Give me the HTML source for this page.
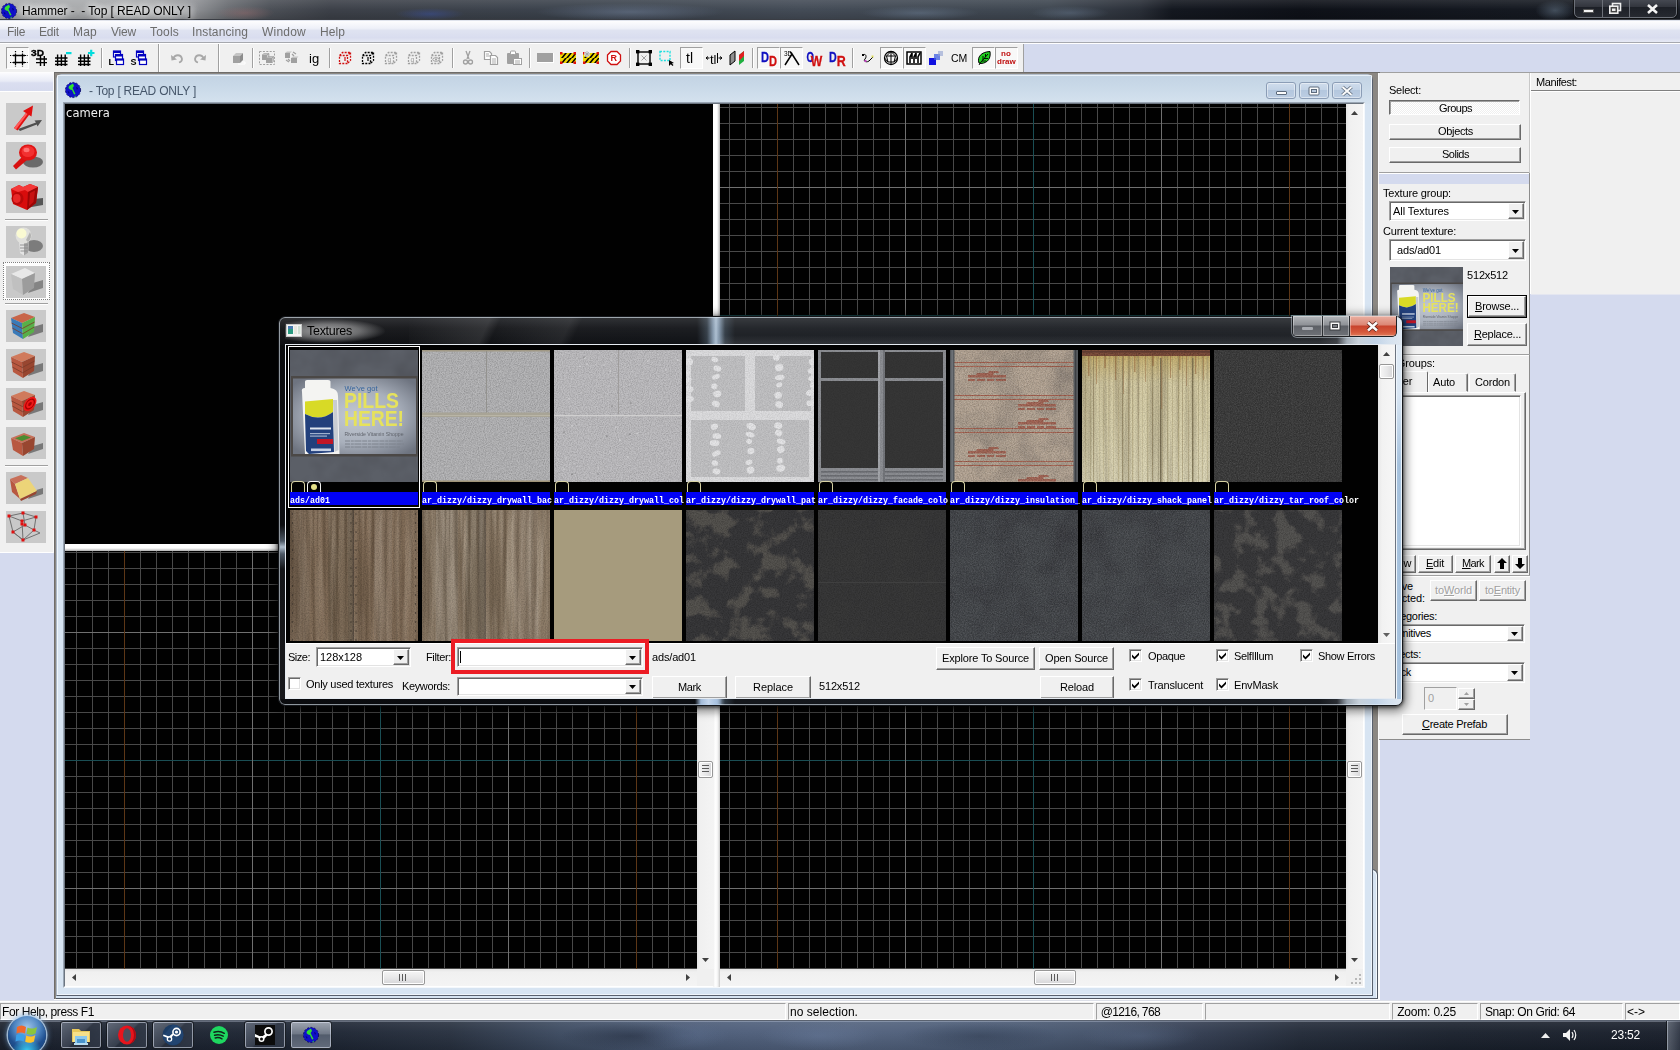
<!DOCTYPE html>
<html><head><meta charset="utf-8"><title>Hammer</title>
<style>
html,body{margin:0;padding:0;}
body{opacity:.999;width:1680px;height:1050px;overflow:hidden;position:relative;background:#d4daee;font-family:"Liberation Sans",sans-serif;font-size:11px;color:#000;}
div{position:absolute;box-sizing:border-box;}
svg{position:absolute;overflow:visible;}
.t{white-space:nowrap;line-height:13px;font-size:11px;}
.s{white-space:nowrap;line-height:15px;font-size:12px;font-family:"DejaVu Sans","Liberation Sans",sans-serif;}
.btn{background:#f0f0f0;border:1px solid;border-color:#fff #696969 #696969 #fff;box-shadow:inset -1px -1px 0 #a0a0a0, inset 1px 1px 0 #f0f0f0;text-align:center;font-size:11px;line-height:13px;white-space:nowrap;}
.sunk{background:#fff;border:1px solid;border-color:#a0a0a0 #fff #fff #a0a0a0;box-shadow:inset 1px 1px 0 #696969, inset -1px -1px 0 #e3e3e3;}
.cb{background:#fff;border:1px solid;border-color:#a0a0a0 #fff #fff #a0a0a0;box-shadow:inset 1px 1px 0 #696969, inset -1px -1px 0 #e3e3e3;}
.mono{font-family:"Liberation Mono",monospace;font-weight:bold;font-size:8.33px;line-height:13px;color:#fff;white-space:nowrap;letter-spacing:0px;}
u{text-decoration:underline;}
</style></head>
<body>
<div style="left:0px;top:0px;width:1680px;height:21px;background:linear-gradient(90deg,#a9abad 0px,#a7a9ab 150px,#8f9195 195px,#6b6e73 228px,#4c5057 270px,#3d4149 330px,#3c434d 560px,#444c57 800px,#3f4751 1050px,#2a2f38 1140px,#141820 1172px,#0e1118 1300px,#141820 1480px,#1a1e26 1680px);"></div>
<div style="left:0px;top:0px;width:1680px;height:21px;background:linear-gradient(rgba(255,255,255,.10) 0,rgba(255,255,255,0) 45%,rgba(0,0,0,.18) 100%);"></div>
<div style="left:535px;top:3px;width:190px;height:18px;background:radial-gradient(ellipse at center,rgba(110,125,150,.55),rgba(110,125,150,0) 70%);"></div>
<div style="left:395px;top:8px;width:70px;height:12px;background:radial-gradient(ellipse at center,rgba(60,90,200,.35),rgba(60,90,200,0) 70%);"></div>
<div style="left:215px;top:6px;width:60px;height:14px;background:radial-gradient(ellipse at center,rgba(170,110,110,.35),rgba(150,120,120,0) 70%);"></div>
<div style="left:860px;top:6px;width:120px;height:14px;background:radial-gradient(ellipse at center,rgba(120,140,165,.40),rgba(120,140,165,0) 70%);"></div>
<div style="left:1030px;top:6px;width:80px;height:14px;background:radial-gradient(ellipse at center,rgba(120,140,165,.35),rgba(120,140,165,0) 70%);"></div>
<div style="left:1535px;top:0px;width:40px;height:21px;background:radial-gradient(ellipse at center,rgba(120,140,160,.45),rgba(120,140,160,0) 70%);"></div>
<div style="left:0px;top:19px;width:1680px;height:1px;background:#3a3d44;"></div>
<div style="left:0px;top:20px;width:1680px;height:1px;background:#dfe3ec;"></div>
<svg width="16" height="16" viewBox="0 0 16 16" style="left:1px;top:3px"><circle cx="8" cy="8" r="7.6" fill="#1010c8"/><circle cx="8" cy="8" r="7.6" fill="none" stroke="#000060" stroke-width=".8" stroke-dasharray="2 1.5"/><path d="M4 4 L8 1.5 L9 4 L7.5 6 L9.5 10 L10.5 12 L9 12.5 L7 8 L5 7.5 L3.5 6 Z" fill="#30e030"/><path d="M9 14.5 L11 13.5 L10.5 15 Z" fill="#30e030"/><path d="M2.5 9 L4.5 10 L4 12 Z M11 5 L13 6 L12 8 Z" fill="#000080"/></svg>
<div style="left:22px;top:4px;white-space:nowrap;font:normal 12px 'Liberation Sans',sans-serif;line-height:15px;letter-spacing:-0.082px;color:#000;text-shadow:0 0 6px #fff,0 0 8px #fff,0 0 10px rgba(255,255,255,.8);">Hammer - &nbsp;- Top [ READ ONLY ]</div>
<div style="left:1574px;top:-3px;width:103px;height:21px;border:1px solid #6c7078;border-radius:0 0 5px 5px;background:linear-gradient(#4a4e57 0%,#33363e 45%,#1d2027 50%,#262930 100%);box-shadow:0 0 0 1px rgba(10,10,10,.6);"></div>
<div style="left:1602px;top:0px;width:1px;height:17px;background:#6c7078;"></div>
<div style="left:1629px;top:0px;width:1px;height:17px;background:#6c7078;"></div>
<div style="left:1583px;top:9px;width:11px;height:4px;background:#f2f2f2;border:1px solid #555;border-radius:1px;"></div>
<svg width="14" height="12" style="left:1609px;top:3px"><rect x="3.5" y=".5" width="8" height="7" fill="none" stroke="#eee" stroke-width="1.6"/><rect x=".8" y="3.2" width="8" height="7" fill="#444" stroke="#eee" stroke-width="1.6"/><rect x="3" y="5.5" width="3.5" height="2.5" fill="#eee"/></svg>
<svg width="12" height="10" style="left:1647px;top:4px"><path d="M1 1 L10 9 M10 1 L1 9" stroke="#f4f4f4" stroke-width="2.6" fill="none"/></svg>
<div style="left:0px;top:21px;width:1680px;height:21px;background:linear-gradient(#fdfdfe 0%,#eef0f8 35%,#dfe3f1 45%,#d9ddef 80%,#e6e9f4 100%);"></div>
<div style="left:0px;top:42px;width:1680px;height:1px;background:#a6a8ae;"></div>
<div style="left:7px;top:25px;white-space:nowrap;font:normal 12px 'Liberation Sans',sans-serif;line-height:15px;letter-spacing:-0.336px;color:#6d6d6d;">File</div>
<div style="left:39px;top:25px;white-space:nowrap;font:normal 12px 'Liberation Sans',sans-serif;line-height:15px;letter-spacing:-0.172px;color:#6d6d6d;">Edit</div>
<div style="left:73px;top:25px;white-space:nowrap;font:normal 12px 'Liberation Sans',sans-serif;line-height:15px;letter-spacing:0.219px;color:#6d6d6d;">Map</div>
<div style="left:111px;top:25px;white-space:nowrap;font:normal 12px 'Liberation Sans',sans-serif;line-height:15px;letter-spacing:-0.199px;color:#6d6d6d;">View</div>
<div style="left:150px;top:25px;white-space:nowrap;font:normal 12px 'Liberation Sans',sans-serif;line-height:15px;letter-spacing:0.197px;color:#6d6d6d;">Tools</div>
<div style="left:192px;top:25px;white-space:nowrap;font:normal 12px 'Liberation Sans',sans-serif;line-height:15px;letter-spacing:0.13px;color:#6d6d6d;">Instancing</div>
<div style="left:262px;top:25px;white-space:nowrap;font:normal 12px 'Liberation Sans',sans-serif;line-height:15px;letter-spacing:0.219px;color:#6d6d6d;">Window</div>
<div style="left:320px;top:25px;white-space:nowrap;font:normal 12px 'Liberation Sans',sans-serif;line-height:15px;letter-spacing:0.078px;color:#6d6d6d;">Help</div>
<div style="left:0px;top:43px;width:1680px;height:30px;background:#d4daee;"></div>
<div style="left:0px;top:43px;width:1024px;height:29px;background:#f0f0f0;"></div>
<div style="left:0px;top:43px;width:1680px;height:1px;background:#fff;"></div>
<div style="left:54px;top:72px;width:1626px;height:1px;background:#a0a0a0;"></div>
<div style="left:0px;top:72px;width:54px;height:1px;background:#fdfdfe;"></div>
<div style="left:158px;top:44px;width:1px;height:28px;background:#a0a0a0;"></div>
<div style="left:159px;top:44px;width:1px;height:28px;background:#fff;"></div>
<div style="left:218px;top:44px;width:1px;height:28px;background:#a0a0a0;"></div>
<div style="left:219px;top:44px;width:1px;height:28px;background:#fff;"></div>
<div style="left:1023px;top:44px;width:1px;height:28px;background:#a0a0a0;"></div>
<div style="left:101px;top:48px;width:1px;height:20px;background:#a0a0a0;"></div>
<div style="left:102px;top:48px;width:1px;height:20px;background:#fff;"></div>
<div style="left:252px;top:48px;width:1px;height:20px;background:#a0a0a0;"></div>
<div style="left:253px;top:48px;width:1px;height:20px;background:#fff;"></div>
<div style="left:329px;top:48px;width:1px;height:20px;background:#a0a0a0;"></div>
<div style="left:330px;top:48px;width:1px;height:20px;background:#fff;"></div>
<div style="left:452px;top:48px;width:1px;height:20px;background:#a0a0a0;"></div>
<div style="left:453px;top:48px;width:1px;height:20px;background:#fff;"></div>
<div style="left:529px;top:48px;width:1px;height:20px;background:#a0a0a0;"></div>
<div style="left:530px;top:48px;width:1px;height:20px;background:#fff;"></div>
<div style="left:629px;top:48px;width:1px;height:20px;background:#a0a0a0;"></div>
<div style="left:630px;top:48px;width:1px;height:20px;background:#fff;"></div>
<div style="left:752px;top:48px;width:1px;height:20px;background:#a0a0a0;"></div>
<div style="left:753px;top:48px;width:1px;height:20px;background:#fff;"></div>
<div style="left:852px;top:48px;width:1px;height:20px;background:#a0a0a0;"></div>
<div style="left:853px;top:48px;width:1px;height:20px;background:#fff;"></div>
<div style="left:6px;top:47px;width:23px;height:22px;background:#f8f8f8;border:1px solid;border-color:#a0a0a0 #fff #fff #a0a0a0;"></div>
<div style="left:680px;top:47px;width:23px;height:22px;background:#f8f8f8;border:1px solid;border-color:#a0a0a0 #fff #fff #a0a0a0;"></div>
<div style="left:757px;top:47px;width:23px;height:22px;background:#f8f8f8;border:1px solid;border-color:#a0a0a0 #fff #fff #a0a0a0;"></div>
<div style="left:780px;top:47px;width:23px;height:22px;background:#f8f8f8;border:1px solid;border-color:#a0a0a0 #fff #fff #a0a0a0;"></div>
<div style="left:880px;top:47px;width:23px;height:22px;background:#f8f8f8;border:1px solid;border-color:#a0a0a0 #fff #fff #a0a0a0;"></div>
<div style="left:903px;top:47px;width:23px;height:22px;background:#f8f8f8;border:1px solid;border-color:#a0a0a0 #fff #fff #a0a0a0;"></div>
<div style="left:972px;top:47px;width:23px;height:22px;background:#f8f8f8;border:1px solid;border-color:#a0a0a0 #fff #fff #a0a0a0;"></div>
<div style="left:995px;top:47px;width:23px;height:22px;background:#f8f8f8;border:1px solid;border-color:#a0a0a0 #fff #fff #a0a0a0;"></div>
<svg width="16" height="16" viewBox="0 0 16 16" style="left:10px;top:51px"><path d="M5.5 3 V13 M12.5 3 V13 M3 4.5 H15 M3 11.5 H15" stroke="#000" stroke-width="1.3" fill="none"/><path d="M5.5 0 V3 M12.5 0 V3 M5.5 13 V16 M12.5 13 V16 M0 4.5 H3 M15 4.5 H18 M0 11.5 H3 M15 11.5 H18" stroke="#000" stroke-width="1.2" stroke-dasharray="1.2 1.2" fill="none"/></svg>
<svg width="16" height="16" viewBox="0 0 16 16" style="left:32px;top:50px"><text x="-1" y="6.3" font-family="Liberation Sans,sans-serif" font-weight="bold" font-size="8.6" fill="#000" stroke="#000" stroke-width=".3" textLength="13" lengthAdjust="spacingAndGlyphs">3D</text><path d="M8.5 6 V16 M12.3 6 V16 M4 9 H15 M4 12.6 H15" stroke="#000" stroke-width="1.4" fill="none"/></svg>
<svg width="16" height="16" viewBox="0 0 16 16" style="left:53px;top:50px"><path d="M4.6 4.5 V16 M8.4 4.5 V16 M12.2 4.5 V16 M2 8 H14.5 M2 11.3 H14.5 M2 14.5 H14.5" stroke="#000" stroke-width="1.4" fill="none"/><rect x="13" y="2" width="5.5" height="2.2" fill="#00dcdc"/></svg>
<svg width="16" height="16" viewBox="0 0 16 16" style="left:76px;top:50px"><path d="M4.6 4.5 V16 M8.4 4.5 V16 M12.2 4.5 V16 M2 8 H14.5 M2 11.3 H14.5 M2 14.5 H14.5" stroke="#000" stroke-width="1.4" fill="none"/><path d="M12 3 H18.5 M15.2 -.2 V6.2" stroke="#00dcdc" stroke-width="2.2"/></svg>
<svg width="16" height="16" viewBox="0 0 16 16" style="left:108px;top:50px"><rect x="5.5" y="1" width="7" height="6" fill="#fff" stroke="#0000c0" stroke-width="1.2"/><rect x="5.5" y="1" width="7" height="2" fill="#0000c0"/><rect x="7.5" y="4.5" width="7" height="6" fill="#fff" stroke="#0000c0" stroke-width="1.2"/><rect x="7.5" y="4.5" width="7" height="2" fill="#0000c0"/><rect x="8.5" y="9" width="7" height="5.5" fill="#fff" stroke="#0000c0" stroke-width="1.2"/><rect x="8.5" y="9" width="7" height="1.6" fill="#0000c0"/><text x=".5" y="15" font-family="Liberation Sans,sans-serif" font-weight="bold" font-size="9" fill="#000">L</text></svg>
<svg width="16" height="16" viewBox="0 0 16 16" style="left:131px;top:50px"><rect x="5.5" y="1" width="7" height="6" fill="#fff" stroke="#0000c0" stroke-width="1.2"/><rect x="5.5" y="1" width="7" height="2" fill="#0000c0"/><rect x="7.5" y="4.5" width="7" height="6" fill="#fff" stroke="#0000c0" stroke-width="1.2"/><rect x="7.5" y="4.5" width="7" height="2" fill="#0000c0"/><rect x="8.5" y="9" width="7" height="5.5" fill="#fff" stroke="#0000c0" stroke-width="1.2"/><rect x="8.5" y="9" width="7" height="1.6" fill="#0000c0"/><text x="-.5" y="15" font-family="Liberation Sans,sans-serif" font-weight="bold" font-size="9" fill="#000">S</text></svg>
<svg width="16" height="16" viewBox="0 0 16 16" style="left:169px;top:50px"><path d="M4 9 C6 4 12 4 13 9 C13 11 12 12 10 12.5" stroke="#a8a8a8" stroke-width="1.8" fill="none"/><path d="M2 5 L2.5 10.5 L8 9.5 Z" fill="#a8a8a8"/></svg>
<svg width="16" height="16" viewBox="0 0 16 16" style="left:192px;top:50px"><path d="M12 9 C10 4 4 4 3 9 C3 11 4 12 6 12.5" stroke="#a8a8a8" stroke-width="1.8" fill="none"/><path d="M14 5 L13.5 10.5 L8 9.5 Z" fill="#a8a8a8"/></svg>
<svg width="16" height="16" viewBox="0 0 16 16" style="left:230px;top:50px"><path d="M3 6 H10 V13 H3 Z" fill="#a0a0a0"/><path d="M3 6 L6 3 H13 L10 6 Z" fill="#c4c4c4"/><path d="M10 6 L13 3 V10 L10 13 Z" fill="#8c8c8c"/><path d="M12 12 H15 V14 H8" stroke="#fff" stroke-width="1" fill="none"/></svg>
<svg width="16" height="16" viewBox="0 0 16 16" style="left:259px;top:50px"><rect x=".5" y="1.5" width="15" height="13" fill="none" stroke="#a0a0a0" stroke-dasharray="2 1.4"/><path d="M3 5 H8 V10 H3 Z M7 8 H13 V13 H7 Z" fill="#a0a0a0"/><path d="M3 5 L5 3.5 H10 L8 5 M8 5 L10 3.5 V8 M7 8 L9 6.5 H14.5 L13 8 M13 8 L14.5 6.5 V11.5 L13 13" fill="#c0c0c0" stroke="#a0a0a0" stroke-width=".6"/></svg>
<svg width="16" height="16" viewBox="0 0 16 16" style="left:283px;top:50px"><path d="M2 3 H7 V8 H2 Z M8 8 H14 V13 H8 Z" fill="#a0a0a0"/><path d="M2 3 L4 1.5 H9 L7 3 Z M8 8 L10 6.5 H15.5 L14 8 Z" fill="#c4c4c4"/><path d="M10 2 L13 4 M3 10 L6 12 M9 4 l2 2 M5 9 l2 2" stroke="#a0a0a0" stroke-width="1.2"/></svg>
<div style="left:309px;top:51px;white-space:nowrap;font:normal 13px 'Liberation Sans',sans-serif;line-height:15px;letter-spacing:0px;color:#000;">ig</div>
<svg width="16" height="16" viewBox="0 0 16 16" style="left:337px;top:50px"><path d="M2.5 5.5 H10.5 V13.5 H2.5 Z M2.5 5.5 L5.5 2.5 H13.5 L10.5 5.5 M13.5 2.5 V10.5 L10.5 13.5" fill="none" stroke="#d01010" stroke-width="1.3" stroke-dasharray="2 1.2"/><path d="M8 7 V11" stroke="#d01010" stroke-width="1.2" fill="none"/></svg>
<svg width="16" height="16" viewBox="0 0 16 16" style="left:360px;top:50px"><path d="M2.5 5.5 H10.5 V13.5 H2.5 Z M2.5 5.5 L5.5 2.5 H13.5 L10.5 5.5 M13.5 2.5 V10.5 L10.5 13.5" fill="none" stroke="#000" stroke-width="1.3" stroke-dasharray="2 1.2"/><path d="M8 7 V11" stroke="#000" stroke-width="1.2" fill="none"/></svg>
<svg width="16" height="16" viewBox="0 0 16 16" style="left:383px;top:50px"><path d="M2.5 5.5 H10.5 V13.5 H2.5 Z M2.5 5.5 L5.5 2.5 H13.5 L10.5 5.5 M13.5 2.5 V10.5 L10.5 13.5" fill="none" stroke="#a0a0a0" stroke-width="1.3" stroke-dasharray="2 1.2"/><text x="4.5" y="12" font-size="7" font-family="Liberation Sans,sans-serif" fill="#a0a0a0">q</text></svg>
<svg width="16" height="16" viewBox="0 0 16 16" style="left:406px;top:50px"><path d="M2.5 5.5 H10.5 V13.5 H2.5 Z M2.5 5.5 L5.5 2.5 H13.5 L10.5 5.5 M13.5 2.5 V10.5 L10.5 13.5" fill="none" stroke="#a0a0a0" stroke-width="1.3" stroke-dasharray="2 1.2"/><text x="4.5" y="12" font-size="7" font-family="Liberation Sans,sans-serif" fill="#a0a0a0">q</text></svg>
<svg width="16" height="16" viewBox="0 0 16 16" style="left:429px;top:50px"><path d="M2.5 5.5 H10.5 V13.5 H2.5 Z M2.5 5.5 L5.5 2.5 H13.5 L10.5 5.5 M13.5 2.5 V10.5 L10.5 13.5" fill="none" stroke="#a0a0a0" stroke-width="1.3" stroke-dasharray="2 1.2"/><ellipse cx="7" cy="9.5" rx="3.2" ry="1.8" fill="none" stroke="#a0a0a0"/><circle cx="7" cy="9.5" r="1" fill="#a0a0a0"/></svg>
<svg width="16" height="16" viewBox="0 0 16 16" style="left:460px;top:50px"><path d="M6 1 L9 9 M10 1 L7 9" stroke="#a0a0a0" stroke-width="1.3" fill="none"/><circle cx="5.5" cy="12" r="2" fill="none" stroke="#a0a0a0" stroke-width="1.3"/><circle cx="10.5" cy="12" r="2" fill="none" stroke="#a0a0a0" stroke-width="1.3"/></svg>
<svg width="16" height="16" viewBox="0 0 16 16" style="left:483px;top:50px"><path d="M1.5 1.5 H6.5 L8.5 3.5 V9.5 H1.5 Z" fill="#fff" stroke="#a0a0a0" stroke-width="1.2"/><path d="M7.5 5.5 H12.5 L14.5 7.5 V14.5 H7.5 Z" fill="#fff" stroke="#a0a0a0" stroke-width="1.2"/><path d="M3 4 h3 M3 6 h4 M9 9 h4 M9 11 h4 M9 13 h4" stroke="#a0a0a0" stroke-width=".9"/></svg>
<svg width="16" height="16" viewBox="0 0 16 16" style="left:506px;top:50px"><rect x="1" y="3" width="12" height="11" rx="1" fill="#a0a0a0"/><rect x="4.5" y="1" width="5" height="3.5" rx="1" fill="#fff" stroke="#a0a0a0"/><rect x="7.5" y="8.5" width="8" height="6" fill="#fff" stroke="#a0a0a0"/><path d="M9 11 h5 M9 13 h5" stroke="#a0a0a0" stroke-width=".9"/></svg>
<div style="left:537px;top:53px;width:17px;height:10px;background:#a0a0a0;border-bottom:1px solid #fff;border-right:1px solid #fff;"></div>
<svg width="16" height="16" viewBox="0 0 16 16" style="left:560px;top:50px"><rect x="0" y="3" width="16" height="10" fill="#f0d800"/><path d="M1 8 l4 -5 h2 l-4 5 Z M6 8 l4 -5 h2 l-4 5 Z M11 8 l4 -5 h1 v1 l-3 4 Z M1 13 l4 -5 h2 l-4 5 Z M6 13 l4 -5 h2 l-4 5 Z M11 13 l4 -5 h1 v1 l-3 4 Z" fill="#000"/><rect x="0" y="2" width="2.5" height="2.5" fill="#e01010"/><rect x="13.5" y="2" width="2.5" height="2.5" fill="#e01010"/><rect x="0" y="11.5" width="2.5" height="2.5" fill="#e01010"/><rect x="13.5" y="11.5" width="2.5" height="2.5" fill="#e01010"/></svg>
<svg width="16" height="16" viewBox="0 0 16 16" style="left:583px;top:50px"><rect x="0" y="3" width="16" height="10" fill="#f0d800"/><path d="M1 8 l4 -5 h2 l-4 5 Z M6 8 l4 -5 h2 l-4 5 Z M11 8 l4 -5 h1 v1 l-3 4 Z M1 13 l4 -5 h2 l-4 5 Z M6 13 l4 -5 h2 l-4 5 Z M11 13 l4 -5 h1 v1 l-3 4 Z" fill="#000"/><rect x="0" y="2" width="2.5" height="2.5" fill="#e01010"/><rect x="13.5" y="2" width="2.5" height="2.5" fill="#e01010"/><rect x="0" y="11.5" width="2.5" height="2.5" fill="#e01010"/><rect x="13.5" y="11.5" width="2.5" height="2.5" fill="#e01010"/><circle cx="4" cy="4" r="3" fill="#f0f0f0" opacity=".9"/><path d="M1 4 h6 M4 1 v6 M2 2 l4 4 M6 2 l-4 4" stroke="#a0a0a0" stroke-width=".7"/></svg>
<svg width="16" height="16" viewBox="0 0 16 16" style="left:606px;top:50px"><path d="M5 1.5 H11 L14.5 5 V11 L11 14.5 H5 L1.5 11 V5 Z" fill="#fff" stroke="#d01010" stroke-width="1.3"/><text x="4.6" y="11.4" font-size="9" font-weight="bold" font-family="Liberation Sans,sans-serif" fill="#d01010">R</text></svg>
<svg width="16" height="16" viewBox="0 0 16 16" style="left:636px;top:50px"><rect x="2" y="2" width="12" height="12" fill="none" stroke="#000" stroke-width="1.4"/><rect x="0" y="0" width="3.4" height="3.4"/><rect x="12.6" y="0" width="3.4" height="3.4"/><rect x="0" y="12.6" width="3.4" height="3.4"/><rect x="12.6" y="12.6" width="3.4" height="3.4"/><path d="M5.5 5.5 l5 5 M10.5 5.5 l-5 5" stroke="#a0a0a0" stroke-width="1"/></svg>
<svg width="16" height="16" viewBox="0 0 16 16" style="left:659px;top:50px"><rect x="1" y="1.5" width="10" height="9" fill="none" stroke="#20e0e0" stroke-width="1.4" stroke-dasharray="2 1.3"/><path d="M10 10 V16 L11.8 14.2 L13.5 16 L14.5 15 L12.8 13.5 L15 13 Z" fill="#000"/></svg>
<div style="left:686px;top:51px;white-space:nowrap;font:normal 14px 'Liberation Sans',sans-serif;line-height:15px;letter-spacing:0px;color:#000;">tl</div>
<div style="left:710px;top:52px;white-space:nowrap;font:normal 13px 'Liberation Sans',sans-serif;line-height:15px;letter-spacing:0px;color:#000;">tl</div>
<svg width="16" height="16" viewBox="0 0 16 16" style="left:706px;top:50px"><path d="M0 8 h3.5 M12.5 8 h3.5 M2 6.5 L0 8 L2 9.5 M14 6.5 L16 8 L14 9.5 M11.5 3 v10" stroke="#000" stroke-width="1" fill="none"/></svg>
<svg width="16" height="16" viewBox="0 0 16 16" style="left:729px;top:50px"><path d="M1 5 L6 1 V11 L1 15 Z" fill="#909090" stroke="#000" stroke-width="1"/><path d="M10 5 L15 1 V11 L10 15 Z" fill="#20b040"/><path d="M10 5 L15 1 V6 L10 11 Z" fill="#e02020"/></svg>
<svg width="16" height="16" viewBox="0 0 16 16" style="left:761px;top:50px"><text x="0" y="12" font-size="15" font-family="Liberation Sans,sans-serif" font-weight="bold" fill="#1010c0" stroke="#1010c0" stroke-width=".3" textLength="8" lengthAdjust="spacingAndGlyphs">D</text><text x="8" y="15.7" font-size="15" font-family="Liberation Sans,sans-serif" font-weight="bold" fill="#d01010" stroke="#d01010" stroke-width=".3" textLength="8" lengthAdjust="spacingAndGlyphs">D</text></svg>
<svg width="16" height="16" viewBox="0 0 16 16" style="left:784px;top:50px"><text x="0" y="6" font-size="6.5" font-family="Liberation Sans,sans-serif">3D</text><path d="M1 15 L8 4 L15 15 M8 4 L6 2" stroke="#000" stroke-width="1.5" fill="none"/></svg>
<svg width="16" height="16" viewBox="0 0 16 16" style="left:806px;top:50px"><text x="0.5" y="11.5" font-size="15" font-family="Liberation Sans,sans-serif" font-weight="bold" fill="#1010c0" stroke="#1010c0" stroke-width=".3" textLength="7.5" lengthAdjust="spacingAndGlyphs">O</text><text x="4.8" y="15.7" font-size="15" font-family="Liberation Sans,sans-serif" font-weight="bold" fill="#d01010" stroke="#d01010" stroke-width=".3" textLength="11.5" lengthAdjust="spacingAndGlyphs">W</text></svg>
<svg width="16" height="16" viewBox="0 0 16 16" style="left:829px;top:50px"><text x="0" y="11.5" font-size="15" font-family="Liberation Sans,sans-serif" font-weight="bold" fill="#1010c0" stroke="#1010c0" stroke-width=".3" textLength="7.7" lengthAdjust="spacingAndGlyphs">D</text><text x="7.7" y="15.7" font-size="15" font-family="Liberation Sans,sans-serif" font-weight="bold" fill="#d01010" stroke="#d01010" stroke-width=".3" textLength="9" lengthAdjust="spacingAndGlyphs">R</text></svg>
<svg width="16" height="16" viewBox="0 0 16 16" style="left:860px;top:50px"><path d="M3 5 C6 3 7 7 5 9 C3 11 6 13 9 11 L13 7" stroke="#000" stroke-width="1" fill="none"/><rect x="2" y="4" width="2" height="2" fill="#000"/><rect x="4.5" y="10" width="2" height="2" fill="#c040c0"/><rect x="11.5" y="5.5" width="2" height="2" fill="#e0e060"/></svg>
<svg width="16" height="16" viewBox="0 0 16 16" style="left:883px;top:50px"><circle cx="8" cy="8" r="6.5" fill="none" stroke="#000" stroke-width="1.3"/><path d="M8 1.5 L3.5 6 L5 12 L11 12 L12.5 6 Z M3.5 6 H12.5 M8 1.5 L8 14.5 M1.5 8 L5 12 M14.5 8 L11 12" fill="none" stroke="#000" stroke-width="1"/></svg>
<svg width="16" height="16" viewBox="0 0 16 16" style="left:906px;top:50px"><rect x="1" y="2" width="14" height="12" fill="#fff" stroke="#000" stroke-width="1.5"/><path d="M4 13 V7 L6 3 V9 M8 13 V7 L10 3 V9 M12 13 V7 L14 3" stroke="#000" stroke-width="1.6" fill="none"/></svg>
<svg width="16" height="16" viewBox="0 0 16 16" style="left:928px;top:50px"><rect x="1" y="8" width="7" height="7" fill="#1010e0"/><rect x="6" y="4" width="6" height="6" fill="#4060e0" opacity=".75"/><rect x="10" y="1" width="5" height="5" fill="#90a0d0" opacity=".6"/></svg>
<div style="left:951px;top:52px;white-space:nowrap;font:normal 10.5px 'Liberation Sans',sans-serif;line-height:13px;letter-spacing:-0.172px;color:#000;">CM</div>
<svg width="16" height="16" viewBox="0 0 16 16" style="left:976px;top:50px"><path d="M3 13 C1 7 5 2 14 1.5 C15 8 12 13 5 13.5 Z" fill="#20d020" stroke="#000" stroke-width="1"/><path d="M3 15 L5 12 L12 4 M6 11 L10 11 M8 8.5 L12 8.5 M7 10 L7 6 M9.5 7 L9.5 4" stroke="#000" stroke-width=".9" fill="none"/></svg>
<div style="left:1001px;top:49px;white-space:nowrap;font:normal 8px 'Liberation Sans',sans-serif;line-height:9px;letter-spacing:0px;color:#c01010;font-weight:bold;">no</div>
<div style="left:997px;top:57px;white-space:nowrap;font:normal 8px 'Liberation Sans',sans-serif;line-height:9px;letter-spacing:0px;color:#c01010;font-weight:bold;">draw</div>
<div style="left:0px;top:73px;width:54px;height:480px;background:#f0f0f0;"></div>
<div style="left:0px;top:73px;width:54px;height:18px;background:linear-gradient(#fbfbfe 0%,#e8ebf6 45%,#dadef0 55%,#d6dbee 100%);"></div>
<div style="left:0px;top:91px;width:54px;height:1px;background:#fff;"></div>
<div style="left:0px;top:552px;width:54px;height:1px;background:#fff;"></div>
<div style="left:53px;top:73px;width:1px;height:480px;background:#fafafa;"></div>
<svg width="40" height="32" viewBox="0 0 40 32" style="left:6px;top:103px"><rect width="40" height="32" fill="#c9c9c9"/><path d="M12 26 L30 19.5 L28.5 17.5 L36 17 L31.5 23.5 L30.8 21.5 L14 28 Z" fill="#3a3a3a" opacity=".85"/><path d="M8 25 L20 10 L17 8 L27 2.5 L25.5 13.5 L23 12 L11.5 27.5 Z" fill="#e01010"/><path d="M8 25 L20 10 L21.5 11 L10 26.5 Z" fill="#ff5a5a"/></svg>
<svg width="40" height="32" viewBox="0 0 40 32" style="left:6px;top:142px"><rect width="40" height="32" fill="#c9c9c9"/><ellipse cx="27" cy="20" rx="10" ry="5.5" fill="#4a4a4a" opacity=".75"/><path d="M7 24 L17 14 L21 18 L10 27.5 Z" fill="#d81010"/><ellipse cx="22" cy="10.5" rx="9" ry="8" fill="#e01414"/><ellipse cx="22" cy="9.5" rx="6.5" ry="5.5" fill="#f23030"/><ellipse cx="20.5" cy="8" rx="3" ry="2.2" fill="#ff7070"/></svg>
<svg width="40" height="32" viewBox="0 0 40 32" style="left:6px;top:181px"><rect width="40" height="32" fill="#c9c9c9"/><path d="M20 27 L37 24 L37 17 L28 18 Z" fill="#3a3a3a" opacity=".8"/><path d="M5 8 L13 4 L17 6 L24 3 L32 6 L30 22 L21 29 L7 23 Z" fill="#d80c0c"/><path d="M5 8 L13 4 L17 6 L24 3 L32 6 L22 11 L19 9 L12 11 Z" fill="#f43838"/><path d="M22 11 L32 6 L30 22 L21 29 Z" fill="#9c0606"/><path d="M24 12 L29 9.5 L27.5 21 L23 25 Z" fill="#c81010"/><ellipse cx="11.5" cy="17.5" rx="6" ry="6.5" fill="#b80808"/><ellipse cx="10.8" cy="17.5" rx="3.8" ry="4.4" fill="#e82828"/></svg>
<svg width="40" height="32" viewBox="0 0 40 32" style="left:6px;top:226px"><rect width="40" height="32" fill="#c9c9c9"/><ellipse cx="28" cy="20" rx="9" ry="6" fill="#4a4a4a" opacity=".6"/><path d="M13 14 H23 L22 27 L18 29.5 L14 27 Z" fill="#e4e4e4"/><path d="M18 14 H23 L22 27 L18 29.5 Z" fill="#a4a4a4"/><circle cx="17.5" cy="9.5" r="8" fill="#e0e0dc"/><circle cx="15.5" cy="7.5" r="5" fill="#fafad2"/><path d="M24 6 A8 8 0 0 1 22 16 L20 14 Z" fill="#a8a8a8" opacity=".8"/><path d="M14 19 h8 M14 22 h8 M14.5 25 h7" stroke="#8c8c8c" stroke-width=".9"/></svg>
<div style="left:3px;top:262px;width:47px;height:38px;background:#fdfdfd;border:1px dotted #808080;"></div>
<svg width="40" height="32" viewBox="0 0 40 32" style="left:6px;top:266px"><rect width="40" height="32" fill="#c9c9c9"/><path d="M22 27 L37 22 L37 14 L27 17 Z" fill="#666" opacity=".7"/><path d="M5 8 L19 2 L29 7 L16 13 Z" fill="#e8e8e8"/><path d="M5 8 L16 13 L17 29 L7 23 Z" fill="#c0c0c0"/><path d="M16 13 L29 7 L28 22 L17 29 Z" fill="#9c9c9c"/></svg>
<svg width="40" height="32" viewBox="0 0 40 32" style="left:6px;top:310px"><rect width="40" height="32" fill="#c9c9c9"/><path d="M22 27 L37 22 L37 14 L27 17 Z" fill="#555" opacity=".7"/><path d="M5 8 L18 3 L29 7 L16 13 Z" fill="#c8664a"/><path d="M5 8 L16 13 L17 29 L7 23 Z" fill="#3a7ab8"/><path d="M16 13 L29 7 L28 22 L17 29 Z" fill="#58b048"/><path d="M5.5 13 L16.3 18.5 L28.6 12 M6.3 18 L16.7 23.8 L28.3 17" stroke="#7a3a28" stroke-width=".8" fill="none"/></svg>
<svg width="40" height="32" viewBox="0 0 40 32" style="left:6px;top:349px"><rect width="40" height="32" fill="#c9c9c9"/><path d="M22 27 L37 22 L37 14 L27 17 Z" fill="#555" opacity=".7"/><path d="M5 8 L18 3 L29 7 L16 13 Z" fill="#d07a5c"/><path d="M5 8 L16 13 L17 29 L7 23 Z" fill="#b85840"/><path d="M16 13 L29 7 L28 22 L17 29 Z" fill="#984630"/><path d="M5.5 13 L16.3 18.5 L28.6 12 M6.3 18 L16.7 23.8 L28.3 17" stroke="#7a3a28" stroke-width=".8" fill="none"/></svg>
<svg width="40" height="32" viewBox="0 0 40 32" style="left:6px;top:388px"><rect width="40" height="32" fill="#c9c9c9"/><path d="M22 27 L37 22 L37 14 L27 17 Z" fill="#555" opacity=".7"/><path d="M5 8 L18 3 L29 7 L16 13 Z" fill="#d07a5c"/><path d="M5 8 L16 13 L17 29 L7 23 Z" fill="#b85840"/><path d="M16 13 L29 7 L28 22 L17 29 Z" fill="#984630"/><path d="M5.5 13 L16.3 18.5 L28.6 12 M6.3 18 L16.7 23.8 L28.3 17" stroke="#7a3a28" stroke-width=".8" fill="none"/><g transform="translate(24,16) skewY(-26)"><circle r="6.5" fill="#f01818"/><circle r="4.4" fill="none" stroke="#a00" stroke-width="1.2"/><circle r="1.8" fill="#a00"/></g></svg>
<svg width="40" height="32" viewBox="0 0 40 32" style="left:6px;top:427px"><rect width="40" height="32" fill="#c9c9c9"/><path d="M22 27 L37 22 L37 16 L27 19 Z" fill="#555" opacity=".7"/><path d="M5 11 L18 6 L29 10 L16 16 Z" fill="#c8705a"/><path d="M9 11.3 L18 8 L25 10.4 L16 14 Z" fill="#4c8c30"/><path d="M5 11 L16 16 L17 29 L7 23 Z" fill="#b85840"/><path d="M16 16 L29 10 L28 22 L17 29 Z" fill="#984630"/></svg>
<svg width="40" height="32" viewBox="0 0 40 32" style="left:6px;top:472px"><rect width="40" height="32" fill="#c9c9c9"/><path d="M22 27 L37 22 L37 16 L27 19 Z" fill="#555" opacity=".7"/><path d="M4 7 L15 3 L22 6 L9 12 Z" fill="#c8705a"/><path d="M4 7 L9 12 L14 27 L6 20 Z" fill="#b85840"/><path d="M9 12 L22 6 L31 19 L14 27 Z" fill="#ecd478"/><path d="M14 27 L31 19 L30 22 L15 29 Z" fill="#984630"/></svg>
<svg width="40" height="32" viewBox="0 0 40 32" style="left:6px;top:511px"><rect width="40" height="32" fill="#c9c9c9"/><path d="M3 5 L17 2 L30 6 L16 10 Z M3 5 L7 21 L17 29 L16 10 M30 6 L28 19 L17 29 M7 21 L19 14 L28 19 M19 14 L17 2 M7 21 L17 29 L34 22 L28 19" fill="none" stroke="#707070" stroke-width="1"/><rect x="1.5" y="3.5" width="3" height="3" fill="#e01010"/><rect x="15.5" y="0.5" width="3" height="3" fill="#e01010"/><rect x="28.5" y="4.5" width="3" height="3" fill="#e01010"/><rect x="14.5" y="8.5" width="3" height="3" fill="#e01010"/><rect x="5.5" y="19.5" width="3" height="3" fill="#e01010"/><rect x="15.5" y="27.5" width="3" height="3" fill="#e01010"/><rect x="26.5" y="17.5" width="3" height="3" fill="#e01010"/><rect x="17.5" y="12.5" width="3" height="3" fill="#e01010"/><rect x="14.5" y="11.5" width="3" height="3" fill="#e01010"/></svg>
<div style="left:5px;top:219px;width:43px;height:1px;background:#a0a0a0;"></div>
<div style="left:5px;top:220px;width:43px;height:1px;background:#fff;"></div>
<div style="left:5px;top:303px;width:43px;height:1px;background:#a0a0a0;"></div>
<div style="left:5px;top:304px;width:43px;height:1px;background:#fff;"></div>
<div style="left:5px;top:465px;width:43px;height:1px;background:#a0a0a0;"></div>
<div style="left:5px;top:466px;width:43px;height:1px;background:#fff;"></div>
<div style="left:54px;top:72px;width:1326px;height:928px;background:#8b8782;"></div>
<div style="left:54px;top:72px;width:1326px;height:1px;background:#6e6c6a;"></div>
<div style="left:54px;top:73px;width:1px;height:927px;background:#6e6c6a;"></div>
<div style="left:1378px;top:73px;width:2px;height:927px;background:#fcfcfc;"></div>
<div style="left:54px;top:999px;width:1326px;height:1px;background:#fcfcfc;"></div>
<div style="left:56px;top:869px;width:1322px;height:130px;background:#d6e3f1;border:1px solid #4f5662;border-left:none;border-radius:0 6px 0 0;box-shadow:inset -1px 1px 0 #f2f7fc;"></div>
<div style="left:56px;top:74px;width:1317px;height:922px;background:#d7e4f2;border:1px solid;border-color:#b4c0ce #59616e #59616e #aab6c4;border-radius:6px 6px 0 0;"></div>
<div style="left:57px;top:75px;width:1315px;height:29px;background:linear-gradient(#c3d3e3 0%,#c9d9e8 40%,#d5e2ef 100%);border-radius:5px 5px 0 0;"></div>
<div style="left:57px;top:75px;width:1315px;height:1px;background:#e8f0f8;border-radius:5px 5px 0 0;"></div>
<div style="left:57px;top:76px;width:1px;height:919px;background:#eef4fb;"></div>
<div style="left:1371px;top:76px;width:1px;height:919px;background:#eef4fb;"></div>
<div style="left:57px;top:994px;width:1315px;height:1px;background:#eef4fb;"></div>
<div style="left:63px;top:102px;width:1302px;height:886px;border:1px solid #9aa6b4;border-right-color:#f4f8fc;border-bottom-color:#f4f8fc;background:#f0f0f0;"></div>
<div style="left:64px;top:103px;width:1300px;height:884px;border:1px solid #6c7580;border-right-color:#fff;border-bottom-color:#fff;"></div>
<svg width="16" height="16" viewBox="0 0 16 16" style="left:65px;top:82px"><circle cx="8" cy="8" r="7.6" fill="#1010c8"/><circle cx="8" cy="8" r="7.6" fill="none" stroke="#000060" stroke-width=".8" stroke-dasharray="2 1.5"/><path d="M4 4 L8 1.5 L9 4 L7.5 6 L9.5 10 L10.5 12 L9 12.5 L7 8 L5 7.5 L3.5 6 Z" fill="#30e030"/><path d="M9 14.5 L11 13.5 L10.5 15 Z" fill="#30e030"/><path d="M2.5 9 L4.5 10 L4 12 Z M11 5 L13 6 L12 8 Z" fill="#000080"/></svg>
<div style="left:89px;top:84px;white-space:nowrap;font:normal 12px 'Liberation Sans',sans-serif;line-height:15px;letter-spacing:-0.23px;color:#46566a;">- Top [ READ ONLY ]</div>
<div style="left:1266px;top:82px;width:30px;height:17px;border:1px solid #8b9db6;border-radius:3px;background:linear-gradient(#cfdcec 0%,#c3d3e6 45%,#b4c7de 50%,#bccde2 100%);box-shadow:inset 0 0 0 1px rgba(255,255,255,.45);"></div>
<div style="left:1299px;top:82px;width:30px;height:17px;border:1px solid #8b9db6;border-radius:3px;background:linear-gradient(#cfdcec 0%,#c3d3e6 45%,#b4c7de 50%,#bccde2 100%);box-shadow:inset 0 0 0 1px rgba(255,255,255,.45);"></div>
<div style="left:1332px;top:82px;width:30px;height:17px;border:1px solid #8b9db6;border-radius:3px;background:linear-gradient(#cfdcec 0%,#c3d3e6 45%,#b4c7de 50%,#bccde2 100%);box-shadow:inset 0 0 0 1px rgba(255,255,255,.45);"></div>
<div style="left:1276px;top:91px;width:11px;height:4px;background:#fcfcfc;border:1px solid #5c6a7c;border-radius:1px;"></div>
<svg width="12" height="10" style="left:1308px;top:86px"><rect x="1" y="1" width="10" height="8" rx="1" fill="#fcfcfc" stroke="#5c6a7c" stroke-width="1"/><rect x="3.5" y="3.5" width="5" height="3" fill="#b8c8dc" stroke="#5c6a7c" stroke-width="1"/></svg>
<svg width="12" height="10" style="left:1341px;top:86px"><path d="M1.5 1 L10.5 9 M10.5 1 L1.5 9" stroke="#5c6a7c" stroke-width="3.6" fill="none"/><path d="M1.5 1 L10.5 9 M10.5 1 L1.5 9" stroke="#fcfcfc" stroke-width="2" fill="none"/></svg>
<div style="left:65px;top:104px;width:648px;height:440px;background:#000;"></div>
<div style="left:66px;top:106px;white-space:nowrap;font:normal 11.5px 'DejaVu Sans',sans-serif;line-height:14px;letter-spacing:0.094px;color:#f0f0f0;">camera</div>
<div style="left:720px;top:104px;width:626px;height:440px;background-color:#000;background-image:linear-gradient(90deg,#494949 1px,transparent 1px),linear-gradient(#494949 1px,transparent 1px);background-size:16px 16px;background-position:9px 3px;overflow:hidden;"><div style="left:0;top:83px;width:626px;height:1px;background:#707070"></div><div style="left:0;top:211px;width:626px;height:1px;background:#1a4e54"></div><div style="left:0;top:339px;width:626px;height:1px;background:#707070"></div><div style="left:57px;top:0;width:1px;height:440px;background:#5c3616"></div><div style="left:185px;top:0;width:1px;height:440px;background:#707070"></div><div style="left:313px;top:0;width:1px;height:440px;background:#1a4e54"></div><div style="left:441px;top:0;width:1px;height:440px;background:#707070"></div><div style="left:569px;top:0;width:1px;height:440px;background:#5c3616"></div></div>
<div style="left:65px;top:551px;width:632px;height:418px;background-color:#000;background-image:linear-gradient(90deg,#494949 1px,transparent 1px),linear-gradient(#494949 1px,transparent 1px);background-size:16px 16px;background-position:11px 1px;overflow:hidden;"><div style="left:0;top:81px;width:632px;height:1px;background:#707070"></div><div style="left:0;top:209px;width:632px;height:1px;background:#1a4e54"></div><div style="left:0;top:337px;width:632px;height:1px;background:#707070"></div><div style="left:59px;top:0;width:1px;height:418px;background:#5c3616"></div><div style="left:187px;top:0;width:1px;height:418px;background:#707070"></div><div style="left:315px;top:0;width:1px;height:418px;background:#1a4e54"></div><div style="left:443px;top:0;width:1px;height:418px;background:#707070"></div><div style="left:571px;top:0;width:1px;height:418px;background:#5c3616"></div></div>
<div style="left:720px;top:551px;width:626px;height:418px;background-color:#000;background-image:linear-gradient(90deg,#494949 1px,transparent 1px),linear-gradient(#494949 1px,transparent 1px);background-size:16px 16px;background-position:9px 1px;overflow:hidden;"><div style="left:0;top:81px;width:626px;height:1px;background:#707070"></div><div style="left:0;top:209px;width:626px;height:1px;background:#1a4e54"></div><div style="left:0;top:337px;width:626px;height:1px;background:#707070"></div><div style="left:57px;top:0;width:1px;height:418px;background:#5c3616"></div><div style="left:185px;top:0;width:1px;height:418px;background:#707070"></div><div style="left:313px;top:0;width:1px;height:418px;background:#1a4e54"></div><div style="left:441px;top:0;width:1px;height:418px;background:#707070"></div><div style="left:569px;top:0;width:1px;height:418px;background:#5c3616"></div></div>
<div style="left:713px;top:104px;width:7px;height:883px;background:linear-gradient(90deg,#fff 0,#fff 4px,#e8e8e8 5px,#b0b0b0 7px);"></div>
<div style="left:65px;top:544px;width:1298px;height:7px;background:linear-gradient(#fff 0,#fff 4px,#e8e8e8 5px,#b0b0b0 7px);"></div>
<div style="left:713px;top:551px;width:7px;height:436px;background:linear-gradient(90deg,#f4f4f4 0,#fff 3px,#f0f0f0 5px,#c8c8c8 7px);"></div>
<div style="left:1346px;top:104px;width:17px;height:440px;background:linear-gradient(90deg,#e4e4e4 0,#f0f0f0 3px,#f4f4f4 100%);"></div>
<svg width="7" height="4" style="left:1351px;top:111px"><path d="M0 4 L3.5 0 L7 4 Z" fill="#404040"/></svg>
<svg width="7" height="4" style="left:1351px;top:533px"><path d="M0 0 L3.5 4 L7 0 Z" fill="#404040"/></svg>
<div style="left:697px;top:551px;width:17px;height:418px;background:linear-gradient(90deg,#e4e4e4 0,#f0f0f0 3px,#f4f4f4 100%);"></div>
<svg width="7" height="4" style="left:702px;top:558px"><path d="M0 4 L3.5 0 L7 4 Z" fill="#404040"/></svg>
<svg width="7" height="4" style="left:702px;top:958px"><path d="M0 0 L3.5 4 L7 0 Z" fill="#404040"/></svg>
<div style="left:698px;top:761px;width:15px;height:17px;border:1px solid #979797;border-radius:2px;background:linear-gradient(90deg,#f6f6f6 0,#e8e8e9 50%,#d6d6d8 100%);box-shadow:inset 0 0 0 1px #fff;"></div>
<div style="left:702px;top:765px;width:7px;height:1px;background:#5a5a5a;"></div>
<div style="left:702px;top:768px;width:7px;height:1px;background:#5a5a5a;"></div>
<div style="left:702px;top:771px;width:7px;height:1px;background:#5a5a5a;"></div>
<div style="left:1346px;top:551px;width:17px;height:418px;background:linear-gradient(90deg,#e4e4e4 0,#f0f0f0 3px,#f4f4f4 100%);"></div>
<svg width="7" height="4" style="left:1351px;top:558px"><path d="M0 4 L3.5 0 L7 4 Z" fill="#404040"/></svg>
<svg width="7" height="4" style="left:1351px;top:958px"><path d="M0 0 L3.5 4 L7 0 Z" fill="#404040"/></svg>
<div style="left:1347px;top:761px;width:15px;height:17px;border:1px solid #979797;border-radius:2px;background:linear-gradient(90deg,#f6f6f6 0,#e8e8e9 50%,#d6d6d8 100%);box-shadow:inset 0 0 0 1px #fff;"></div>
<div style="left:1351px;top:765px;width:7px;height:1px;background:#5a5a5a;"></div>
<div style="left:1351px;top:768px;width:7px;height:1px;background:#5a5a5a;"></div>
<div style="left:1351px;top:771px;width:7px;height:1px;background:#5a5a5a;"></div>
<div style="left:65px;top:969px;width:632px;height:17px;background:linear-gradient(#e4e4e4 0,#f0f0f0 3px,#f4f4f4 100%);"></div>
<svg width="4" height="7" style="left:72px;top:974px"><path d="M4 0 L0 3.5 L4 7 Z" fill="#404040"/></svg>
<svg width="4" height="7" style="left:686px;top:974px"><path d="M0 0 L4 3.5 L0 7 Z" fill="#404040"/></svg>
<div style="left:382px;top:970px;width:43px;height:15px;border:1px solid #979797;border-radius:2px;background:linear-gradient(#f6f6f6 0,#e8e8e9 50%,#d6d6d8 100%);box-shadow:inset 0 0 0 1px #fff;"></div>
<div style="left:399px;top:974px;width:1px;height:7px;background:#5a5a5a;"></div>
<div style="left:402px;top:974px;width:1px;height:7px;background:#5a5a5a;"></div>
<div style="left:405px;top:974px;width:1px;height:7px;background:#5a5a5a;"></div>
<div style="left:720px;top:969px;width:626px;height:17px;background:linear-gradient(#e4e4e4 0,#f0f0f0 3px,#f4f4f4 100%);"></div>
<svg width="4" height="7" style="left:727px;top:974px"><path d="M4 0 L0 3.5 L4 7 Z" fill="#404040"/></svg>
<svg width="4" height="7" style="left:1335px;top:974px"><path d="M0 0 L4 3.5 L0 7 Z" fill="#404040"/></svg>
<div style="left:1034px;top:970px;width:42px;height:15px;border:1px solid #979797;border-radius:2px;background:linear-gradient(#f6f6f6 0,#e8e8e9 50%,#d6d6d8 100%);box-shadow:inset 0 0 0 1px #fff;"></div>
<div style="left:1051px;top:974px;width:1px;height:7px;background:#5a5a5a;"></div>
<div style="left:1054px;top:974px;width:1px;height:7px;background:#5a5a5a;"></div>
<div style="left:1057px;top:974px;width:1px;height:7px;background:#5a5a5a;"></div>
<div style="left:697px;top:969px;width:17px;height:17px;background:#f0f0f0;"></div>
<div style="left:1346px;top:969px;width:17px;height:17px;background:#f0f0f0;"></div>
<svg width="12" height="12" style="left:1350px;top:973px"><path d="M9 1 h2 v2 h-2z M9 5 h2 v2 h-2z M9 9 h2 v2 h-2z M5 5 h2 v2 h-2z M5 9 h2 v2 h-2z M1 9 h2 v2 h-2z" fill="#b8b8b8"/></svg>
<div style="left:1378px;top:73px;width:152px;height:100px;background:#f0f0f0;"></div>
<div style="left:1378px;top:73px;width:1px;height:927px;background:#fafafa;"></div>
<div style="left:1379px;top:172px;width:151px;height:1px;background:#a0a0a0;"></div>
<div style="left:1529px;top:73px;width:1px;height:100px;background:#c8c8c8;"></div>
<div style="left:1389px;top:84px;white-space:nowrap;font:normal 11px 'Liberation Sans',sans-serif;line-height:13px;letter-spacing:-0.234px;">Select:</div>
<div style="left:1389px;top:100px;width:131px;height:15px;background:#f8f8f8 repeating-conic-gradient(#ffffff 0% 25%, #efefef 0% 50%) 0 0/2px 2px;border:1px solid;border-color:#696969 #fff #fff #696969;box-shadow:inset 1px 1px 0 #a0a0a0;"></div>
<div style="left:1439px;top:102px;white-space:nowrap;font:normal 11px 'Liberation Sans',sans-serif;line-height:13px;letter-spacing:-0.513px;">Groups</div>
<div style="left:1389px;top:124px;width:132px;height:16px;background:#f0f0f0;border:1px solid;border-color:#fff #696969 #696969 #fff;box-shadow:inset -1px -1px 0 #a0a0a0;"></div>
<div style="left:1438px;top:125px;white-space:nowrap;font:normal 11px 'Liberation Sans',sans-serif;line-height:13px;letter-spacing:-0.328px;color:#000;">Objects</div>
<div style="left:1389px;top:147px;width:132px;height:16px;background:#f0f0f0;border:1px solid;border-color:#fff #696969 #696969 #fff;box-shadow:inset -1px -1px 0 #a0a0a0;"></div>
<div style="left:1442px;top:148px;white-space:nowrap;font:normal 11px 'Liberation Sans',sans-serif;line-height:13px;letter-spacing:-0.495px;color:#000;">Solids</div>
<div style="left:1379px;top:173px;width:150px;height:11px;background:#d4daee;border-top:1px solid #fff;"></div>
<div style="left:1379px;top:184px;width:151px;height:171px;background:#f0f0f0;"></div>
<div style="left:1529px;top:173px;width:1px;height:182px;background:#8c8c8c;"></div>
<div style="left:1379px;top:354px;width:151px;height:1px;background:#a0a0a0;"></div>
<div style="left:1383px;top:187px;white-space:nowrap;font:normal 11px 'Liberation Sans',sans-serif;line-height:13px;letter-spacing:-0.166px;">Texture group:</div>
<div class="sunk" style="left:1389px;top:201px;width:137px;height:20px;"></div>
<div style="left:1508px;top:203px;width:16px;height:16px;background:#f0f0f0;border:1px solid;border-color:#fff #696969 #696969 #fff;box-shadow:inset -1px -1px 0 #a0a0a0;"></div>
<svg width="7" height="4" style="left:1512px;top:210px"><path d="M0 0 H7 L3.5 4 Z" fill="#000"/></svg>
<div style="left:1393px;top:205px;white-space:nowrap;font:normal 11px 'Liberation Sans',sans-serif;line-height:13px;letter-spacing:-0.055px;">All Textures</div>
<div style="left:1383px;top:225px;white-space:nowrap;font:normal 11px 'Liberation Sans',sans-serif;line-height:13px;letter-spacing:-0.214px;">Current texture:</div>
<div class="sunk" style="left:1389px;top:239px;width:137px;height:22px;"></div>
<div style="left:1508px;top:241px;width:16px;height:18px;background:#f0f0f0;border:1px solid;border-color:#fff #696969 #696969 #fff;box-shadow:inset -1px -1px 0 #a0a0a0;"></div>
<svg width="7" height="4" style="left:1512px;top:249px"><path d="M0 0 H7 L3.5 4 Z" fill="#000"/></svg>
<div style="left:1397px;top:244px;white-space:nowrap;font:normal 11px 'Liberation Sans',sans-serif;line-height:13px;letter-spacing:-0.158px;">ads/ad01</div>
<div style="left:1467px;top:269px;white-space:nowrap;font:normal 11px 'Liberation Sans',sans-serif;line-height:13px;letter-spacing:-0.174px;">512x512</div>
<div style="left:1467px;top:295px;width:60px;height:23px;background:#000;"></div>
<div style="left:1468px;top:296px;width:58px;height:21px;background:#f0f0f0;border:1px solid;border-color:#fff #696969 #696969 #fff;box-shadow:inset -1px -1px 0 #a0a0a0;"></div>
<div style="left:1475px;top:300px;white-space:nowrap;font:normal 11px 'Liberation Sans',sans-serif;line-height:13px;letter-spacing:-0.207px;color:#000;"><u>B</u>rowse...</div>
<div style="left:1467px;top:323px;width:60px;height:23px;background:#f0f0f0;border:1px solid;border-color:#fff #696969 #696969 #fff;box-shadow:inset -1px -1px 0 #a0a0a0;"></div>
<div style="left:1474px;top:328px;white-space:nowrap;font:normal 11px 'Liberation Sans',sans-serif;line-height:13px;letter-spacing:-0.255px;color:#000;"><u>R</u>eplace...</div>
<div style="left:1390px;top:267px;width:73px;height:79px;overflow:hidden;"><svg width="77" height="79" viewBox="0 0 128 132" preserveAspectRatio="none" style="left:0px;top:0px">
<rect width="128" height="132" fill="#5b5f67"/><rect width="128" height="132" filter="url(#cloud)" opacity=".22"/>
<rect x="1" y="26" width="126.5" height="80.5" fill="#4b4846"/>
<rect x="3" y="28.5" width="123" height="75.5" fill="url(#vign)"/>
<g filter="url(#blur1)">
<path d="M12 42 Q11 38 15 38 L15 31.5 Q15 30 17 30 L38 30 Q40.5 30 40.5 31.5 L40.5 38 Q48 39 48 46 L49.5 104 L15 104 Z" fill="#f4f4f2"/>
<path d="M15 51.5 L43 49 L43 62 Q30 72 15 64 Z" fill="#d8da28"/>
<path d="M15 64 Q30 72 43 62 L44 102 L19 104 L16 101 Z" fill="#20407c"/>
<path d="M43 50 L47 50 L48.5 100 L44.5 102 Z" fill="#c8ccd2"/>
<rect x="27" y="89" width="16" height="5" fill="#c01828"/>
<rect x="20" y="77.5" width="21" height="2" fill="#dfe6f0"/><rect x="20" y="83" width="20" height="1.2" fill="#9fb0cc"/><rect x="20" y="85.5" width="17" height="1.2" fill="#9fb0cc"/><rect x="21" y="98.5" width="20" height="2.6" fill="#c4d0e4"/>
</g>
<text x="54.5" y="41" font-family="Liberation Sans,sans-serif" font-size="7.6" fill="#35649c" textLength="33" lengthAdjust="spacingAndGlyphs">We've got</text>
<text x="54" y="58" font-family="Liberation Sans,sans-serif" font-weight="bold" font-size="21.5" fill="#e6e25c" textLength="55" lengthAdjust="spacingAndGlyphs">PILLS</text>
<text x="54" y="76" font-family="Liberation Sans,sans-serif" font-weight="bold" font-size="21.5" fill="#e6e25c" textLength="60" lengthAdjust="spacingAndGlyphs">HERE!</text>
<text x="54.5" y="86" font-family="Liberation Sans,sans-serif" font-size="5.6" fill="#60646c" textLength="59" lengthAdjust="spacingAndGlyphs">Riverside Vitamin Shoppe</text>
<path d="M55 91 H113 M55 94 H114 M55 97 H110" stroke="#7c828c" stroke-width="1" stroke-dasharray="5 .8 3 .6 7 .8" fill="none"/>
</svg></div>
<div style="left:1379px;top:355px;width:151px;height:220px;background:#f0f0f0;border-top:1px solid #fff;"></div>
<div style="left:1529px;top:355px;width:1px;height:385px;background:#8c8c8c;"></div>
<div style="left:1382px;top:357px;white-space:nowrap;font:normal 11px 'Liberation Sans',sans-serif;line-height:13px;letter-spacing:-0.122px;">VisGroups:</div>
<div style="left:1384px;top:371px;width:44px;height:22px;background:#f0f0f0;border:1px solid;border-color:#fff #696969 transparent #fff;border-radius:2px 2px 0 0;"></div>
<div style="left:1390px;top:375px;white-space:nowrap;font:normal 11px 'Liberation Sans',sans-serif;line-height:13px;letter-spacing:-0.309px;">User</div>
<div style="left:1428px;top:373px;width:40px;height:19px;background:#f0f0f0;border:1px solid;border-color:#fff #696969 transparent #fff;border-radius:2px 2px 0 0;box-shadow:inset -1px 0 0 #a0a0a0;"></div>
<div style="left:1433px;top:376px;white-space:nowrap;font:normal 11px 'Liberation Sans',sans-serif;line-height:13px;letter-spacing:-0.16px;">Auto</div>
<div style="left:1469px;top:373px;width:47px;height:19px;background:#f0f0f0;border:1px solid;border-color:#fff #696969 transparent #fff;border-radius:2px 2px 0 0;box-shadow:inset -1px 0 0 #a0a0a0;"></div>
<div style="left:1475px;top:376px;white-space:nowrap;font:normal 11px 'Liberation Sans',sans-serif;line-height:13px;letter-spacing:-0.18px;">Cordon</div>
<div style="left:1384px;top:392px;width:142px;height:158px;background:#f0f0f0;border:1px solid;border-color:#fff #696969 #696969 #fff;box-shadow:inset -1px -1px 0 #a0a0a0;"></div>
<div class="sunk" style="left:1387px;top:395px;width:134px;height:152px;"></div>
<div style="left:1384px;top:555px;width:32px;height:18px;background:#f0f0f0;border:1px solid;border-color:#fff #696969 #696969 #fff;box-shadow:inset -1px -1px 0 #a0a0a0;"></div>
<div style="left:1390px;top:557px;white-space:nowrap;font:normal 11px 'Liberation Sans',sans-serif;line-height:13px;letter-spacing:-0.339px;color:#000;"><u>N</u>ew</div>
<div style="left:1418px;top:555px;width:35px;height:18px;background:#f0f0f0;border:1px solid;border-color:#fff #696969 #696969 #fff;box-shadow:inset -1px -1px 0 #a0a0a0;"></div>
<div style="left:1426px;top:557px;white-space:nowrap;font:normal 11px 'Liberation Sans',sans-serif;line-height:13px;letter-spacing:-0.242px;color:#000;"><u>E</u>dit</div>
<div style="left:1455px;top:555px;width:36px;height:18px;background:#f0f0f0;border:1px solid;border-color:#fff #696969 #696969 #fff;box-shadow:inset -1px -1px 0 #a0a0a0;"></div>
<div style="left:1462px;top:557px;white-space:nowrap;font:normal 11px 'Liberation Sans',sans-serif;line-height:13px;letter-spacing:-0.613px;color:#000;"><u>M</u>ark</div>
<div style="left:1494px;top:555px;width:16px;height:18px;background:#f0f0f0;border:1px solid;border-color:#fff #696969 #696969 #fff;box-shadow:inset -1px -1px 0 #a0a0a0;"></div>
<div style="left:1502px;top:557px;white-space:nowrap;font:normal 11px 'Liberation Sans',sans-serif;line-height:13px;letter-spacing:0.0px;color:#000;"></div>
<div style="left:1512px;top:555px;width:16px;height:18px;background:#f0f0f0;border:1px solid;border-color:#fff #696969 #696969 #fff;box-shadow:inset -1px -1px 0 #a0a0a0;"></div>
<div style="left:1520px;top:557px;white-space:nowrap;font:normal 11px 'Liberation Sans',sans-serif;line-height:13px;letter-spacing:0.0px;color:#000;"></div>
<svg width="10" height="11" style="left:1497px;top:558px"><path d="M5 0 L10 5 H7 V11 H3 V5 H0 Z" fill="#000"/></svg>
<svg width="10" height="11" style="left:1515px;top:558px"><path d="M5 11 L10 6 H7 V0 H3 V6 H0 Z" fill="#000"/></svg>
<div style="left:1379px;top:575px;width:151px;height:1px;background:#a0a0a0;"></div>
<div style="left:1379px;top:576px;width:151px;height:164px;background:#f0f0f0;border-top:1px solid #fff;"></div>
<div style="left:1387px;top:580px;white-space:nowrap;font:normal 11px 'Liberation Sans',sans-serif;line-height:13px;letter-spacing:-0.227px;">Move</div>
<div style="left:1382px;top:592px;white-space:nowrap;font:normal 11px 'Liberation Sans',sans-serif;line-height:13px;letter-spacing:-0.115px;">selected:</div>
<div style="left:1430px;top:580px;width:47px;height:21px;background:#f0f0f0;border:1px solid;border-color:#fff #696969 #696969 #fff;box-shadow:inset -1px -1px 0 #a0a0a0;"></div>
<div style="left:1435px;top:584px;white-space:nowrap;font:normal 11px 'Liberation Sans',sans-serif;line-height:13px;letter-spacing:-0.103px;color:#a0a0a0;text-shadow:1px 1px 0 #fff;">to<u>W</u>orld</div>
<div style="left:1479px;top:580px;width:47px;height:21px;background:#f0f0f0;border:1px solid;border-color:#fff #696969 #696969 #fff;box-shadow:inset -1px -1px 0 #a0a0a0;"></div>
<div style="left:1485px;top:584px;white-space:nowrap;font:normal 11px 'Liberation Sans',sans-serif;line-height:13px;letter-spacing:-0.215px;color:#a0a0a0;text-shadow:1px 1px 0 #fff;">to<u>E</u>ntity</div>
<div style="left:1384px;top:610px;white-space:nowrap;font:normal 11px 'Liberation Sans',sans-serif;line-height:13px;letter-spacing:-0.297px;">Categories:</div>
<div class="sunk" style="left:1383px;top:624px;width:142px;height:19px;"></div>
<div style="left:1507px;top:626px;width:16px;height:15px;background:#f0f0f0;border:1px solid;border-color:#fff #696969 #696969 #fff;box-shadow:inset -1px -1px 0 #a0a0a0;"></div>
<svg width="7" height="4" style="left:1511px;top:632px"><path d="M0 0 H7 L3.5 4 Z" fill="#000"/></svg>
<div style="left:1387px;top:627px;white-space:nowrap;font:normal 11px 'Liberation Sans',sans-serif;line-height:13px;letter-spacing:-0.367px;">Primitives</div>
<div style="left:1383px;top:648px;white-space:nowrap;font:normal 11px 'Liberation Sans',sans-serif;line-height:13px;letter-spacing:-0.295px;">Objects:</div>
<div class="sunk" style="left:1383px;top:662px;width:142px;height:21px;"></div>
<div style="left:1507px;top:664px;width:16px;height:17px;background:#f0f0f0;border:1px solid;border-color:#fff #696969 #696969 #fff;box-shadow:inset -1px -1px 0 #a0a0a0;"></div>
<svg width="7" height="4" style="left:1511px;top:671px"><path d="M0 0 H7 L3.5 4 Z" fill="#000"/></svg>
<div style="left:1387px;top:666px;white-space:nowrap;font:normal 11px 'Liberation Sans',sans-serif;line-height:13px;letter-spacing:-0.338px;">block</div>
<div class="sunk" style="left:1424px;top:687px;width:33px;height:23px;background:#f0f0f0;"></div>
<div style="left:1425px;top:688px;width:31px;height:21px;background:#f0f0f0;"></div>
<div style="left:1428px;top:692px;white-space:nowrap;font:normal 11px 'Liberation Sans',sans-serif;line-height:13px;letter-spacing:0px;color:#a0a0a0;">0</div>
<div style="left:1458px;top:688px;width:17px;height:11px;background:#f0f0f0;border:1px solid;border-color:#fff #696969 #696969 #fff;box-shadow:inset -1px -1px 0 #a0a0a0;"></div>
<div style="left:1466px;top:687px;white-space:nowrap;font:normal 11px 'Liberation Sans',sans-serif;line-height:13px;letter-spacing:0.0px;color:#000;"></div>
<div style="left:1458px;top:699px;width:17px;height:11px;background:#f0f0f0;border:1px solid;border-color:#fff #696969 #696969 #fff;box-shadow:inset -1px -1px 0 #a0a0a0;"></div>
<div style="left:1466px;top:698px;white-space:nowrap;font:normal 11px 'Liberation Sans',sans-serif;line-height:13px;letter-spacing:0.0px;color:#000;"></div>
<svg width="5" height="3" style="left:1464px;top:692px"><path d="M0 3 L2.5 0 L5 3 Z" fill="#a0a0a0"/></svg>
<svg width="5" height="3" style="left:1464px;top:703px"><path d="M0 0 L2.5 3 L5 0 Z" fill="#a0a0a0"/></svg>
<div style="left:1402px;top:714px;width:106px;height:21px;background:#f0f0f0;border:1px solid;border-color:#fff #696969 #696969 #fff;box-shadow:inset -1px -1px 0 #a0a0a0;"></div>
<div style="left:1422px;top:718px;white-space:nowrap;font:normal 11px 'Liberation Sans',sans-serif;line-height:13px;letter-spacing:-0.269px;color:#000;"><u>C</u>reate Prefab</div>
<div style="left:1379px;top:739px;width:151px;height:1px;background:#8c8c8c;"></div>
<div style="left:1531px;top:73px;width:149px;height:221px;background:#f0f0f0;"></div>
<div style="left:1530px;top:73px;width:1px;height:221px;background:#fff;"></div>
<div style="left:1536px;top:76px;white-space:nowrap;font:normal 11px 'Liberation Sans',sans-serif;line-height:13px;letter-spacing:-0.405px;">Manifest:</div>
<div style="left:1531px;top:90px;width:149px;height:2px;background:#808080;border-bottom:1px solid #fff;"></div>
<div style="left:1531px;top:294px;width:149px;height:1px;background:#e4e6f0;"></div>
<div style="left:0px;top:1000px;width:1680px;height:20px;background:#f0f0f0;"></div>
<div style="left:0px;top:1000px;width:1680px;height:1px;background:#dcdfe8;"></div>
<div style="left:0px;top:1001px;width:1680px;height:1px;background:#fff;"></div>
<div style="left:0px;top:1003px;width:786px;height:17px;border:1px solid;border-color:#a0a0a0 #fff #fff #a0a0a0;"></div>
<div style="left:2px;top:1004px;white-space:nowrap;font:normal 12px 'Liberation Sans',sans-serif;line-height:16px;letter-spacing:-0.41px;">For Help, press F1</div>
<div style="left:788px;top:1003px;width:306px;height:17px;border:1px solid;border-color:#a0a0a0 #fff #fff #a0a0a0;"></div>
<div style="left:790px;top:1004px;white-space:nowrap;font:normal 12px 'Liberation Sans',sans-serif;line-height:16px;letter-spacing:0.047px;">no selection.</div>
<div style="left:1096px;top:1003px;width:107px;height:17px;border:1px solid;border-color:#a0a0a0 #fff #fff #a0a0a0;"></div>
<div style="left:1098px;top:1004px;white-space:nowrap;font:normal 12px 'Liberation Sans',sans-serif;line-height:16px;letter-spacing:-0.628px;">&nbsp;@1216, 768</div>
<div style="left:1205px;top:1003px;width:185px;height:17px;border:1px solid;border-color:#a0a0a0 #fff #fff #a0a0a0;"></div>
<div style="left:1392px;top:1003px;width:86px;height:17px;border:1px solid;border-color:#a0a0a0 #fff #fff #a0a0a0;"></div>
<div style="left:1394px;top:1004px;white-space:nowrap;font:normal 12px 'Liberation Sans',sans-serif;line-height:16px;letter-spacing:-0.185px;">&nbsp;Zoom: 0.25</div>
<div style="left:1480px;top:1003px;width:143px;height:17px;border:1px solid;border-color:#a0a0a0 #fff #fff #a0a0a0;"></div>
<div style="left:1482px;top:1004px;white-space:nowrap;font:normal 12px 'Liberation Sans',sans-serif;line-height:16px;letter-spacing:-0.392px;">&nbsp;Snap: On Grid: 64</div>
<div style="left:1625px;top:1003px;width:55px;height:17px;border:1px solid;border-color:#a0a0a0 #fff #fff #a0a0a0;"></div>
<div style="left:1627px;top:1004px;white-space:nowrap;font:normal 12px 'Liberation Sans',sans-serif;line-height:16px;letter-spacing:-0.005px;">&lt;-&gt;</div>
<div style="left:0px;top:1020px;width:1680px;height:30px;background:linear-gradient(90deg,#1a202c 0,#1c2330 60px,#1d2533 330px,#27303f 450px,#3c4a60 560px,#4c5c78 700px,#52627e 850px,#4a5a74 1000px,#44526a 1100px,#323c50 1200px,#222a38 1300px,#1a212d 1450px,#181e2a 1680px);"></div>
<div style="left:0px;top:1020px;width:1680px;height:30px;background:linear-gradient(rgba(255,255,255,.10) 0,rgba(255,255,255,.03) 40%,rgba(0,0,0,.12) 100%);"></div>
<div style="left:0px;top:1020px;width:1680px;height:1px;background:#5a6270;"></div>
<div style="left:0px;top:1021px;width:1680px;height:1px;background:rgba(200,210,225,.35);"></div>
<div style="left:560px;top:1022px;width:140px;height:28px;background:radial-gradient(ellipse at center,rgba(28,36,52,.45),rgba(0,0,0,0) 70%);"></div>
<div style="left:760px;top:1022px;width:120px;height:28px;background:radial-gradient(ellipse at center,rgba(110,130,165,.35),rgba(0,0,0,0) 70%);"></div>
<div style="left:900px;top:1022px;width:160px;height:28px;background:radial-gradient(ellipse at center,rgba(34,44,62,.35),rgba(0,0,0,0) 70%);"></div>
<div style="left:1080px;top:1022px;width:120px;height:28px;background:radial-gradient(ellipse at center,rgba(100,118,150,.3),rgba(0,0,0,0) 70%);"></div>
<div style="left:640px;top:1022px;width:90px;height:28px;background:radial-gradient(ellipse at center,rgba(100,120,155,.3),rgba(0,0,0,0) 70%);"></div>
<div style="left:8px;top:1016px;width:38px;height:38px;border-radius:50%;background:radial-gradient(circle at 50% 30%,#9fc4e8 0,#4f86c2 38%,#1f4f8f 62%,#123a70 100%);box-shadow:0 0 0 1.5px rgba(190,215,240,.75),0 0 5px 2px rgba(120,170,220,.55);"></div>
<div style="left:12px;top:1038px;width:30px;height:16px;border-radius:50%;background:radial-gradient(ellipse at 50% 80%,rgba(60,220,255,.9),rgba(60,220,255,0) 70%);"></div>
<svg width="22" height="20" viewBox="0 0 22 20" style="left:16px;top:1024px"><path d="M1 3 C4 1 7 1 10 3 L9 9.5 C6 8 3.5 8 .5 9.5 Z" fill="#f0682c"/><path d="M11.5 3.5 C14 5 17.5 5 21 3 L19.5 9.5 C16.5 11.5 13.5 11 10.5 9.8 Z" fill="#8cc63c"/><path d="M.3 11 C3 9.5 6 9.5 8.8 11 L7.8 17.5 C5 16 2.5 16 -.5 17.5 Z" fill="#3aa0e8"/><path d="M10.2 11.5 C13 13 16 13 19.3 11 L18 17.5 C15 19.5 12 19 9.2 17.8 Z" fill="#fcc42c"/></svg>
<div style="left:60px;top:1021px;width:42px;height:28px;border:1px solid rgba(20,24,30,.9);border-radius:3px;background:linear-gradient(135deg,rgba(170,180,198,.42) 0,rgba(120,130,150,.30) 48%,rgba(60,68,84,.35) 52%,rgba(90,100,120,.32) 100%);box-shadow:inset 0 0 0 1px rgba(225,232,245,.55);"></div>
<div style="left:106px;top:1021px;width:42px;height:28px;border:1px solid rgba(20,24,30,.9);border-radius:3px;background:linear-gradient(135deg,rgba(170,180,198,.42) 0,rgba(120,130,150,.30) 48%,rgba(60,68,84,.35) 52%,rgba(90,100,120,.32) 100%);box-shadow:inset 0 0 0 1px rgba(225,232,245,.55);"></div>
<div style="left:152px;top:1021px;width:42px;height:28px;border:1px solid rgba(20,24,30,.9);border-radius:3px;background:linear-gradient(135deg,rgba(170,180,198,.42) 0,rgba(120,130,150,.30) 48%,rgba(60,68,84,.35) 52%,rgba(90,100,120,.32) 100%);box-shadow:inset 0 0 0 1px rgba(225,232,245,.55);"></div>
<div style="left:244px;top:1021px;width:42px;height:28px;border:1px solid rgba(20,24,30,.9);border-radius:3px;background:linear-gradient(135deg,rgba(170,180,198,.42) 0,rgba(120,130,150,.30) 48%,rgba(60,68,84,.35) 52%,rgba(90,100,120,.32) 100%);box-shadow:inset 0 0 0 1px rgba(225,232,245,.55);"></div>
<div style="left:290px;top:1021px;width:42px;height:28px;border:1px solid rgba(20,24,30,.9);border-radius:3px;background:linear-gradient(rgba(225,232,242,.62) 0,rgba(190,200,216,.5) 45%,rgba(150,162,182,.42) 50%,rgba(170,182,202,.5) 100%);box-shadow:inset 0 0 0 1px rgba(225,232,245,.55);"></div>
<svg width="20" height="20" viewBox="0 0 20 20" style="left:71px;top:1026px"><path d="M1 3 H8 L10 5 H19 V16 H1 Z" fill="#e8c85a"/><path d="M2 6 H18 V16 H2 Z" fill="#f6e08a"/><path d="M4 10 H16 V18 H4 Z" fill="#8cc8ec"/><path d="M6 13 H14 V18 H6 Z" fill="#4a94cc"/><path d="M3 17 H17 V19 H3 Z" fill="#b8dcf0"/></svg>
<svg width="20" height="20" viewBox="0 0 20 20" style="left:117px;top:1025px"><ellipse cx="10" cy="10" rx="9" ry="9.5" fill="#e8141c"/><ellipse cx="10" cy="10" rx="4" ry="6.8" fill="#4a4e5c"/><path d="M10 .5 A9 9.5 0 0 1 10 19.5 A7 9.5 0 0 0 10 .5" fill="#a80c14"/></svg>
<svg width="22" height="22" viewBox="0 0 22 22" style="left:162px;top:1024px"><circle cx="11" cy="11" r="10.5" fill="#1c3c64"/><path d="M.6 12 A10.5 10.5 0 0 0 21.5 11 A10.5 10.5 0 0 0 11 .5 Z" fill="#244a78" opacity=".6"/><circle cx="14.5" cy="8" r="3.6" fill="none" stroke="#fff" stroke-width="1.6"/><circle cx="14.5" cy="8" r="1.6" fill="#fff"/><path d="M1 12 L8 15 L12 10.5 L10.5 9.5 L7 12.5 L1.5 10.5 Z" fill="#fff"/><circle cx="7.5" cy="15" r="2.8" fill="#fff"/><circle cx="7.5" cy="15" r="1.5" fill="#1c3c64"/></svg>
<svg width="18" height="18" viewBox="0 0 18 18" style="left:210px;top:1026px"><circle cx="9" cy="9" r="9" fill="#1ed760"/><path d="M4 6.3 C7.5 5.2 11.5 5.6 14.3 7.3 M4.6 9.2 C7.5 8.4 10.8 8.8 13.2 10.2 M5.2 11.9 C7.5 11.3 10 11.6 12 12.8" stroke="#12221a" stroke-width="1.5" fill="none" stroke-linecap="round"/></svg>
<svg width="20" height="20" viewBox="0 0 20 20" style="left:255px;top:1025px"><rect width="20" height="20" fill="#0c0c0c"/><circle cx="13.5" cy="6.5" r="3.6" fill="none" stroke="#fff" stroke-width="1.7"/><path d="M0 9 L6.5 12 L11 8.5 L12.5 10.5 L8.5 14.5 L0 12 Z" fill="#fff"/><circle cx="6.5" cy="14" r="3" fill="#fff"/><circle cx="6.5" cy="14" r="1.5" fill="#0c0c0c"/></svg>
<svg width="16" height="16" viewBox="0 0 16 16" style="left:303px;top:1027px"><circle cx="8" cy="8" r="7.6" fill="#1010c8"/><circle cx="8" cy="8" r="7.6" fill="none" stroke="#000060" stroke-width=".8" stroke-dasharray="2 1.5"/><path d="M4 4 L8 1.5 L9 4 L7.5 6 L9.5 10 L10.5 12 L9 12.5 L7 8 L5 7.5 L3.5 6 Z" fill="#30e030"/><path d="M9 14.5 L11 13.5 L10.5 15 Z" fill="#30e030"/><path d="M2.5 9 L4.5 10 L4 12 Z M11 5 L13 6 L12 8 Z" fill="#000080"/></svg>
<svg width="9" height="5" style="left:1541px;top:1033px"><path d="M0 5 L4.5 0 L9 5 Z" fill="#f0f0f0"/></svg>
<svg width="16" height="14" viewBox="0 0 16 14" style="left:1562px;top:1028px"><path d="M1 5 H4 L8 1 V13 L4 9 H1 Z" fill="#f4f4f4"/><path d="M10 4 Q12 7 10 10 M12 2 Q15.5 7 12 12" stroke="#f4f4f4" stroke-width="1.2" fill="none"/></svg>
<div style="left:1611px;top:1028px;white-space:nowrap;font:normal 12px 'Liberation Sans',sans-serif;line-height:15px;letter-spacing:-0.206px;color:#fff;">23:52</div>
<div style="left:1666px;top:1021px;width:14px;height:29px;border-left:1px solid rgba(10,12,16,.8);background:linear-gradient(90deg,rgba(200,210,225,.35),rgba(120,130,150,.25));box-shadow:inset 1px 0 0 rgba(220,228,240,.45);"></div>
<svg width="0" height="0" style="left:0;top:0"><defs>
<filter id="grainD" color-interpolation-filters="sRGB" x="0" y="0" width="100%" height="100%"><feTurbulence type="fractalNoise" baseFrequency="0.85" numOctaves="2" seed="3"/><feColorMatrix type="matrix" values="0 0 0 0 0  0 0 0 0 0  0 0 0 0 0  1.8 0 0 0 -0.62"/></filter>
<filter id="grainL" color-interpolation-filters="sRGB" x="0" y="0" width="100%" height="100%"><feTurbulence type="fractalNoise" baseFrequency="0.9" numOctaves="2" seed="11"/><feColorMatrix type="matrix" values="0 0 0 0 1  0 0 0 0 1  0 0 0 0 1  0 1.8 0 0 -0.66"/></filter>
<filter id="streak" color-interpolation-filters="sRGB" x="0" y="0" width="100%" height="100%"><feTurbulence type="fractalNoise" baseFrequency="0.22 0.006" numOctaves="3" seed="5"/><feColorMatrix type="matrix" values="0 0 0 0 0.15  0 0 0 0 0.1  0 0 0 0 0.05  2.4 0 0 0 -0.95"/></filter>
<filter id="streakL" color-interpolation-filters="sRGB" x="0" y="0" width="100%" height="100%"><feTurbulence type="fractalNoise" baseFrequency="0.16 0.008" numOctaves="3" seed="21"/><feColorMatrix type="matrix" values="0 0 0 0 0.86  0 0 0 0 0.82  0 0 0 0 0.76  0 2.6 0 0 -1.15"/></filter>
<filter id="blotch" color-interpolation-filters="sRGB" x="0" y="0" width="100%" height="100%"><feTurbulence type="fractalNoise" baseFrequency="0.045" numOctaves="5" seed="8"/><feColorMatrix type="matrix" values="0 0 0 0 0.335  0 0 0 0 0.325  0 0 0 0 0.31  7 0 0 0 -3.45"/></filter>
<filter id="blotch2" color-interpolation-filters="sRGB" x="0" y="0" width="100%" height="100%"><feTurbulence type="fractalNoise" baseFrequency="0.048" numOctaves="5" seed="31"/><feColorMatrix type="matrix" values="0 0 0 0 0.335  0 0 0 0 0.328  0 0 0 0 0.32  7 0 0 0 -3.4"/></filter>
<filter id="cloud" color-interpolation-filters="sRGB" x="0" y="0" width="100%" height="100%"><feTurbulence type="fractalNoise" baseFrequency="0.03" numOctaves="3" seed="14"/><feColorMatrix type="matrix" values="0 0 0 0 0.2  0 0 0 0 0.2  0 0 0 0 0.22  2.5 0 0 0 -1.0"/></filter>
<filter id="blur1"><feGaussianBlur stdDeviation="0.6"/></filter>
<filter id="blur2"><feGaussianBlur stdDeviation="2.2"/></filter>
<radialGradient id="vign" cx="50%" cy="50%" r="65%"><stop offset="0" stop-color="#c2c8d2"/><stop offset=".55" stop-color="#a9b0bc"/><stop offset="1" stop-color="#6e7480"/></radialGradient>
</defs></svg>
<div style="left:278px;top:316px;width:1125px;height:390px;border-radius:8px;box-shadow:0 1px 3px 1px rgba(0,0,0,.5), 0 2px 9px 4px rgba(0,0,0,.42);"></div>
<div style="left:278px;top:316px;width:1125px;height:390px;border-radius:7px;border:1px solid #15171b;overflow:hidden;background:linear-gradient(90deg,#0a0b0e 0px,#0b0d11 418px,#2c3640 428px,#7f93a8 434px,#a9bccf 437px,#7f93a8 440px,#2c3640 446px,#14171c 456px,#15181d 1040px,#2a2d33 1058px,#9aa5b0 1068px,#c6d0da 1080px,#c0d2e6 1096px,#d3e0ee 1110px,#dfe7f0 1123px);"><div style="left:0;top:0;width:1123px;height:28px;background:linear-gradient(rgba(255,255,255,.16) 0,rgba(255,255,255,.07) 40%,rgba(255,255,255,.02) 100%)"></div><div style="left:0;top:0;width:1123px;height:388px;border-radius:6px;border:1px solid rgba(225,235,245,.62)"></div><div style="left:440px;top:18px;width:640px;height:10px;background:linear-gradient(rgba(255,255,255,0),rgba(255,255,255,.11))"></div><div style="left:6px;top:2px;width:100px;height:24px;background:radial-gradient(ellipse at 42% 50%,rgba(255,255,255,.6) 0,rgba(255,255,255,.36) 40%,rgba(255,255,255,0) 72%)"></div><div style="left:130px;top:0;width:260px;height:27px;background:linear-gradient(115deg,rgba(255,255,255,0) 0,rgba(255,255,255,.10) 30%,rgba(255,255,255,0) 34%,rgba(255,255,255,.07) 60%,rgba(255,255,255,0) 64%)"></div><div style="left:416px;top:381px;width:27px;height:7px;background:linear-gradient(90deg,rgba(170,195,225,0),rgba(170,195,225,.95) 22%,rgba(196,214,236,1) 50%,rgba(170,195,225,.95) 78%,rgba(170,195,225,0))"></div><div style="left:1px;top:28px;width:6px;height:354px;background:linear-gradient(#0b0c0e 0,#0c0d10 180px,#4d5865 196px,#aebccb 202px,#4d5865 209px,#141518 224px,#17181b 354px)"></div><div style="left:1116px;top:28px;width:7px;height:354px;background:linear-gradient(90deg,#5c6470 0,#5c6470 1px,#eef5fc 1px,#eef5fc 2px,#a9c4df 2px,#a3bfdb 5px,#b4cce4 6px,#eaf2fa 6px)"></div><div style="left:1118px;top:28px;width:4px;height:120px;background:linear-gradient(rgba(228,238,248,.95) 0,rgba(228,238,248,.8) 50px,rgba(228,238,248,0) 120px)"></div></div>
<svg width="16" height="13" style="left:286px;top:324px"><rect x=".5" y=".5" width="15" height="12" fill="#f4f4f4" stroke="#c8c8c8"/><rect x="2" y="2" width="5" height="8" fill="#2a9a80"/><rect x="2" y="2" width="5" height="3" fill="#4a7ab0"/><rect x="8" y="2" width="3" height="8" fill="#e8e8e0"/><rect x="12" y="2" width="2.5" height="8" fill="#d0e0d4"/></svg>
<div style="left:307px;top:324px;white-space:nowrap;font:normal 12.5px 'Liberation Sans',sans-serif;line-height:15px;letter-spacing:-0.281px;color:#000;">Textures</div>
<div style="left:1292px;top:316px;width:105px;height:21px;border:1px solid #1e2024;border-top:none;border-radius:0 0 5px 5px;background:#555;overflow:hidden;box-shadow:0 0 0 1px rgba(220,230,240,.45);"><div style="left:0;top:0;width:29px;height:20px;background:linear-gradient(#b4b7bb 0,#8e9196 45%,#5d6066 50%,#6e7177 100%);box-shadow:inset 0 0 0 1px rgba(255,255,255,.35)"></div><div style="left:29px;top:0;width:1px;height:20px;background:#2c2e32"></div><div style="left:30px;top:0;width:26px;height:20px;background:linear-gradient(#b4b7bb 0,#8e9196 45%,#5d6066 50%,#6e7177 100%);box-shadow:inset 0 0 0 1px rgba(255,255,255,.35)"></div><div style="left:56px;top:0;width:1px;height:20px;background:#2c2e32"></div><div style="left:57px;top:0;width:47px;height:20px;background:linear-gradient(#eab0a2 0,#dc8674 45%,#c8432c 50%,#d6593c 80%,#e07a58 100%);box-shadow:inset 0 0 0 1px rgba(255,255,255,.35)"></div></div>
<div style="left:1302px;top:327px;width:11px;height:3px;background:#a9acb2;border-radius:1px;"></div>
<svg width="12" height="10" style="left:1329px;top:321px"><rect x="1" y="1" width="10" height="8" fill="#f8f8f8" stroke="#3a3c40" stroke-width="1"/><rect x="3.5" y="3.5" width="5" height="3" fill="#7a7d83" stroke="#3a3c40" stroke-width="1"/></svg>
<svg width="13" height="11" style="left:1366px;top:321px"><path d="M2 1.5 L11 9.5 M11 1.5 L2 9.5" stroke="#5a2018" stroke-width="4.2" fill="none"/><path d="M2 1.5 L11 9.5 M11 1.5 L2 9.5" stroke="#fbfbfb" stroke-width="2.6" fill="none"/></svg>
<div style="left:285px;top:344px;width:1111px;height:355px;background:#f0f0f0;border:1px solid #e6ebf1;border-right-color:#6c7480;"></div>
<div style="left:286px;top:345px;width:1092px;height:298px;background:#000;"></div>
<div style="left:286px;top:643px;width:1109px;height:1px;background:#fff;"></div>
<svg width="128" height="132" viewBox="0 0 128 132" preserveAspectRatio="none" style="left:290px;top:350px">
<rect width="128" height="132" fill="#5b5f67"/><rect width="128" height="132" filter="url(#cloud)" opacity=".22"/>
<rect x="1" y="26" width="126.5" height="80.5" fill="#4b4846"/>
<rect x="3" y="28.5" width="123" height="75.5" fill="url(#vign)"/>
<g filter="url(#blur1)">
<path d="M12 42 Q11 38 15 38 L15 31.5 Q15 30 17 30 L38 30 Q40.5 30 40.5 31.5 L40.5 38 Q48 39 48 46 L49.5 104 L15 104 Z" fill="#f4f4f2"/>
<path d="M15 51.5 L43 49 L43 62 Q30 72 15 64 Z" fill="#d8da28"/>
<path d="M15 64 Q30 72 43 62 L44 102 L19 104 L16 101 Z" fill="#20407c"/>
<path d="M43 50 L47 50 L48.5 100 L44.5 102 Z" fill="#c8ccd2"/>
<rect x="27" y="89" width="16" height="5" fill="#c01828"/>
<rect x="20" y="77.5" width="21" height="2" fill="#dfe6f0"/><rect x="20" y="83" width="20" height="1.2" fill="#9fb0cc"/><rect x="20" y="85.5" width="17" height="1.2" fill="#9fb0cc"/><rect x="21" y="98.5" width="20" height="2.6" fill="#c4d0e4"/>
</g>
<text x="54.5" y="41" font-family="Liberation Sans,sans-serif" font-size="7.6" fill="#35649c" textLength="33" lengthAdjust="spacingAndGlyphs">We've got</text>
<text x="54" y="58" font-family="Liberation Sans,sans-serif" font-weight="bold" font-size="21.5" fill="#e6e25c" textLength="55" lengthAdjust="spacingAndGlyphs">PILLS</text>
<text x="54" y="76" font-family="Liberation Sans,sans-serif" font-weight="bold" font-size="21.5" fill="#e6e25c" textLength="60" lengthAdjust="spacingAndGlyphs">HERE!</text>
<text x="54.5" y="86" font-family="Liberation Sans,sans-serif" font-size="5.6" fill="#60646c" textLength="59" lengthAdjust="spacingAndGlyphs">Riverside Vitamin Shoppe</text>
<path d="M55 91 H113 M55 94 H114 M55 97 H110" stroke="#7c828c" stroke-width="1" stroke-dasharray="5 .8 3 .6 7 .8" fill="none"/>
</svg>
<svg width="128" height="132" viewBox="0 0 128 132" style="left:422px;top:350px;overflow:hidden"><rect width="128" height="132" fill="#b1b1b3"/><rect width="128" height="132" filter="url(#grainD)" opacity="0.19"/><rect width="128" height="132" filter="url(#grainL)" opacity="0.17"/><rect y="0" width="128" height="1.5" fill="#a09884"/><rect x="64" y="1" width=".8" height="62" fill="#8e8c88"/><rect y="62.5" width="128" height="4.5" fill="#a8a496"/><rect y="65" width="128" height="1" fill="#b9b5a6"/><rect y="130.5" width="128" height="1.5" fill="#a09478"/></svg>
<svg width="128" height="132" viewBox="0 0 128 132" style="left:554px;top:350px;overflow:hidden"><rect width="128" height="132" fill="#bab9bc"/><rect width="128" height="132" filter="url(#grainD)" opacity="0.17"/><rect width="128" height="132" filter="url(#grainL)" opacity="0.19"/><rect x="64" y="0" width=".8" height="64" fill="#9a9896"/><rect y="65" width="128" height="1.2" fill="#d0cfcf"/><circle cx="44" cy="124" r=".6" fill="#4a4a4a"/><circle cx="53" cy="86" r=".6" fill="#4a4a4a"/><circle cx="12" cy="108" r=".6" fill="#f4f4f4"/><circle cx="15" cy="49" r=".6" fill="#f4f4f4"/><circle cx="10" cy="119" r=".6" fill="#f4f4f4"/><circle cx="30" cy="7" r=".6" fill="#4a4a4a"/><circle cx="58" cy="56" r=".6" fill="#4a4a4a"/><circle cx="33" cy="14" r=".6" fill="#f4f4f4"/><circle cx="57" cy="10" r=".6" fill="#f4f4f4"/><circle cx="18" cy="124" r=".6" fill="#4a4a4a"/><circle cx="83" cy="83" r=".6" fill="#f4f4f4"/><circle cx="124" cy="10" r=".6" fill="#f4f4f4"/><circle cx="77" cy="53" r=".6" fill="#4a4a4a"/><circle cx="31" cy="8" r=".6" fill="#f4f4f4"/><circle cx="112" cy="20" r=".6" fill="#f4f4f4"/><circle cx="56" cy="21" r=".6" fill="#f4f4f4"/><circle cx="18" cy="76" r=".6" fill="#f4f4f4"/><circle cx="74" cy="107" r=".6" fill="#f4f4f4"/><circle cx="26" cy="16" r=".6" fill="#f4f4f4"/><circle cx="76" cy="84" r=".6" fill="#4a4a4a"/><circle cx="50" cy="15" r=".6" fill="#f4f4f4"/><circle cx="94" cy="11" r=".6" fill="#f4f4f4"/><circle cx="10" cy="82" r=".6" fill="#4a4a4a"/><circle cx="66" cy="90" r=".6" fill="#f4f4f4"/><circle cx="57" cy="102" r=".6" fill="#f4f4f4"/><circle cx="62" cy="77" r=".6" fill="#f4f4f4"/></svg>
<svg width="128" height="132" viewBox="0 0 128 132" style="left:686px;top:350px;overflow:hidden"><rect width="128" height="132" fill="#dadadc"/><rect x="5" y="6" width="54" height="55" fill="#bdbdbf"/><rect x="69" y="6" width="56" height="55" fill="#bdbdbf"/><rect x="5" y="70" width="118" height="57" fill="#bdbdbf"/><ellipse cx="28.7" cy="10.0" rx="3.6" ry="2.5" fill="#e2e2e4" transform="rotate(19 30 10)"/><ellipse cx="31.5" cy="18.0" rx="4.1" ry="2.9" fill="#e2e2e4" transform="rotate(16 30 18)"/><ellipse cx="30.0" cy="26.8" rx="4.1" ry="2.3" fill="#e2e2e4" transform="rotate(-20 30 27)"/><ellipse cx="28.2" cy="36.8" rx="3.1" ry="2.9" fill="#e2e2e4" transform="rotate(12 30 37)"/><ellipse cx="31.3" cy="44.1" rx="4.0" ry="3.3" fill="#e2e2e4" transform="rotate(-9 30 44)"/><ellipse cx="29.8" cy="53.9" rx="4.1" ry="3.0" fill="#e2e2e4" transform="rotate(23 30 54)"/><ellipse cx="90.3" cy="8.0" rx="3.4" ry="3.2" fill="#e2e2e4" transform="rotate(16 92 8)"/><ellipse cx="93.3" cy="17.8" rx="4.2" ry="3.6" fill="#e2e2e4" transform="rotate(-12 92 18)"/><ellipse cx="93.8" cy="27.7" rx="4.8" ry="2.7" fill="#e2e2e4" transform="rotate(-8 92 28)"/><ellipse cx="93.1" cy="35.3" rx="3.1" ry="2.3" fill="#e2e2e4" transform="rotate(-22 92 35)"/><ellipse cx="92.0" cy="45.3" rx="3.7" ry="3.5" fill="#e2e2e4" transform="rotate(-20 92 45)"/><ellipse cx="93.3" cy="54.1" rx="4.0" ry="3.4" fill="#e2e2e4" transform="rotate(25 92 54)"/><ellipse cx="2.7" cy="12.0" rx="4.4" ry="3.6" fill="#e2e2e4" transform="rotate(-6 2 12)"/><ellipse cx="0.9" cy="22.8" rx="3.1" ry="2.4" fill="#e2e2e4" transform="rotate(-16 2 23)"/><ellipse cx="1.1" cy="29.9" rx="4.6" ry="2.5" fill="#e2e2e4" transform="rotate(-21 2 30)"/><ellipse cx="3.8" cy="38.6" rx="3.6" ry="3.0" fill="#e2e2e4" transform="rotate(14 2 39)"/><ellipse cx="3.0" cy="49.0" rx="4.9" ry="3.1" fill="#e2e2e4" transform="rotate(-1 2 49)"/><ellipse cx="127.2" cy="12.0" rx="4.5" ry="3.4" fill="#e2e2e4" transform="rotate(-5 126 12)"/><ellipse cx="125.6" cy="20.6" rx="3.7" ry="2.9" fill="#e2e2e4" transform="rotate(-18 126 21)"/><ellipse cx="125.4" cy="27.9" rx="3.3" ry="2.4" fill="#e2e2e4" transform="rotate(-27 126 28)"/><ellipse cx="127.8" cy="35.3" rx="4.0" ry="3.0" fill="#e2e2e4" transform="rotate(9 126 35)"/><ellipse cx="124.6" cy="42.4" rx="4.7" ry="3.1" fill="#e2e2e4" transform="rotate(-14 126 42)"/><ellipse cx="124.5" cy="53.2" rx="4.1" ry="2.9" fill="#e2e2e4" transform="rotate(1 126 53)"/><ellipse cx="28.3" cy="76.0" rx="3.8" ry="2.9" fill="#e2e2e4" transform="rotate(-24 30 76)"/><ellipse cx="30.8" cy="86.0" rx="4.4" ry="2.9" fill="#e2e2e4" transform="rotate(3 30 86)"/><ellipse cx="28.6" cy="93.1" rx="4.9" ry="2.9" fill="#e2e2e4" transform="rotate(4 30 93)"/><ellipse cx="30.6" cy="103.7" rx="4.5" ry="2.6" fill="#e2e2e4" transform="rotate(-25 30 104)"/><ellipse cx="28.7" cy="113.5" rx="3.4" ry="2.7" fill="#e2e2e4" transform="rotate(19 30 114)"/><ellipse cx="30.5" cy="121.4" rx="4.0" ry="2.9" fill="#e2e2e4" transform="rotate(9 30 121)"/><ellipse cx="65.2" cy="76.0" rx="5.0" ry="3.4" fill="#e2e2e4" transform="rotate(22 64 76)"/><ellipse cx="64.0" cy="84.6" rx="4.6" ry="2.5" fill="#e2e2e4" transform="rotate(16 64 85)"/><ellipse cx="63.0" cy="91.7" rx="2.9" ry="2.6" fill="#e2e2e4" transform="rotate(14 64 92)"/><ellipse cx="64.9" cy="101.1" rx="3.6" ry="3.3" fill="#e2e2e4" transform="rotate(-8 64 101)"/><ellipse cx="62.9" cy="112.0" rx="3.6" ry="2.5" fill="#e2e2e4" transform="rotate(-18 64 112)"/><ellipse cx="64.4" cy="120.3" rx="3.9" ry="3.6" fill="#e2e2e4" transform="rotate(-30 64 120)"/><ellipse cx="92.3" cy="76.0" rx="4.2" ry="3.3" fill="#e2e2e4" transform="rotate(12 94 76)"/><ellipse cx="92.8" cy="83.5" rx="3.7" ry="3.2" fill="#e2e2e4" transform="rotate(26 94 83)"/><ellipse cx="95.2" cy="91.2" rx="4.5" ry="2.7" fill="#e2e2e4" transform="rotate(16 94 91)"/><ellipse cx="94.9" cy="99.8" rx="3.7" ry="3.5" fill="#e2e2e4" transform="rotate(-20 94 100)"/><ellipse cx="93.9" cy="110.7" rx="2.9" ry="3.0" fill="#e2e2e4" transform="rotate(11 94 111)"/><ellipse cx="94.6" cy="118.3" rx="4.6" ry="3.6" fill="#e2e2e4" transform="rotate(-8 94 118)"/><rect width="128" height="132" filter="url(#grainD)" opacity="0.1"/><rect width="128" height="132" filter="url(#grainL)" opacity="0.17"/></svg>
<svg width="128" height="132" viewBox="0 0 128 132" style="left:818px;top:350px;overflow:hidden"><rect width="128" height="132" fill="#8c8e93"/><rect x="3" y="2" width="57" height="26" fill="#353535"/><rect x="67" y="2" width="58" height="26" fill="#353535"/><rect x="3" y="31" width="57" height="87" fill="#363636"/><rect x="67" y="31" width="58" height="87" fill="#363636"/><rect x="60" y="0" width="2" height="132" fill="#a4a6ab"/><rect x="65" y="0" width="2" height="132" fill="#74767b"/><rect x="3" y="121" width="57" height="1.6" fill="#6c6e73"/><rect x="67" y="121" width="58" height="1.6" fill="#6c6e73"/><rect x="3" y="125" width="57" height="1.6" fill="#6c6e73"/><rect x="67" y="125" width="58" height="1.6" fill="#6c6e73"/><rect x="3" y="129" width="57" height="1.6" fill="#6c6e73"/><rect x="67" y="129" width="58" height="1.6" fill="#6c6e73"/><rect width="128" height="132" filter="url(#grainD)" opacity="0.11"/></svg>
<svg width="128" height="132" viewBox="0 0 128 132" style="left:950px;top:350px;overflow:hidden"><rect width="128" height="132" fill="#b3a392"/><rect width="128" height="132" filter="url(#cloud)" opacity=".25"/><rect x="4" y="12" width="120" height="1" fill="#a25e4c"/><rect x="4" y="16" width="120" height="1" fill="#a25e4c"/><rect x="4" y="45" width="120" height="1" fill="#a25e4c"/><rect x="4" y="49" width="120" height="1" fill="#a25e4c"/><rect x="4" y="78" width="120" height="1" fill="#a25e4c"/><rect x="4" y="82" width="120" height="1" fill="#a25e4c"/><rect x="4" y="111" width="120" height="1" fill="#a25e4c"/><rect x="4" y="115" width="120" height="1" fill="#a25e4c"/><g transform="translate(18,21)"><path d="M0 4 H8 L9 2 H20 L21 0 H30 L31 2 H26 L25 4 H38 V6.5 H0 Z M0 8 H7 V10 H0 Z M9 8 H17 V10 H9 Z M19 8 H26 V10 H19 Z M28 8 H38 V10 H28 Z" fill="#9c5645" opacity=".85"/></g><g transform="translate(68,50)"><path d="M0 4 H8 L9 2 H20 L21 0 H30 L31 2 H26 L25 4 H38 V6.5 H0 Z M0 8 H7 V10 H0 Z M9 8 H17 V10 H9 Z M19 8 H26 V10 H19 Z M28 8 H38 V10 H28 Z" fill="#9c5645" opacity=".85"/></g><g transform="translate(68,68)"><path d="M0 4 H8 L9 2 H20 L21 0 H30 L31 2 H26 L25 4 H38 V6.5 H0 Z M0 8 H7 V10 H0 Z M9 8 H17 V10 H9 Z M19 8 H26 V10 H19 Z M28 8 H38 V10 H28 Z" fill="#9c5645" opacity=".85"/></g><g transform="translate(18,97)"><path d="M0 4 H8 L9 2 H20 L21 0 H30 L31 2 H26 L25 4 H38 V6.5 H0 Z M0 8 H7 V10 H0 Z M9 8 H17 V10 H9 Z M19 8 H26 V10 H19 Z M28 8 H38 V10 H28 Z" fill="#9c5645" opacity=".85"/></g><g transform="translate(68,125)"><path d="M0 4 H8 L9 2 H20 L21 0 H30 L31 2 H26 L25 4 H38 V6.5 H0 Z M0 8 H7 V10 H0 Z M9 8 H17 V10 H9 Z M19 8 H26 V10 H19 Z M28 8 H38 V10 H28 Z" fill="#9c5645" opacity=".85"/></g><rect width="128" height="132" filter="url(#grainD)" opacity="0.22"/><rect width="128" height="132" filter="url(#grainL)" opacity="0.17"/><rect x="0" width="4.5" height="132" fill="#55595d"/><rect x="1.5" width="1.2" height="132" fill="#787c82"/><rect x="123.5" width="4.5" height="132" fill="#55595d"/><rect x="125" width="1.2" height="132" fill="#3c3e42"/></svg>
<svg width="128" height="132" viewBox="0 0 128 132" style="left:1082px;top:350px;overflow:hidden"><defs><linearGradient id="rust" x1="0" y1="0" x2="0" y2="1"><stop offset="0" stop-color="#bfa052"/><stop offset=".08" stop-color="#ccb87c"/><stop offset=".25" stop-color="#d6cda6"/><stop offset="1" stop-color="#ddd7b8"/></linearGradient></defs><rect width="128" height="132" fill="url(#rust)"/><rect x="3" y="5" width="1.3" height="127" fill="#9c8e62" opacity="0.26"/><rect x="8" y="5" width="1.3" height="127" fill="#a89c74" opacity="0.43"/><rect x="11" y="5" width="0.8" height="127" fill="#8a7c56" opacity="0.60"/><rect x="17" y="5" width="0.8" height="127" fill="#9c8e62" opacity="0.26"/><rect x="21" y="5" width="0.8" height="127" fill="#b8ac82" opacity="0.43"/><rect x="26" y="5" width="1.3" height="127" fill="#b8ac82" opacity="0.34"/><rect x="31" y="5" width="1" height="127" fill="#9c8e62" opacity="0.27"/><rect x="36" y="5" width="1.3" height="127" fill="#b8ac82" opacity="0.56"/><rect x="40" y="5" width="1.3" height="127" fill="#8a7c56" opacity="0.54"/><rect x="46" y="5" width="1.3" height="127" fill="#9c8e62" opacity="0.44"/><rect x="50" y="5" width="1.3" height="127" fill="#a89c74" opacity="0.56"/><rect x="56" y="5" width="0.8" height="127" fill="#a89c74" opacity="0.52"/><rect x="60" y="5" width="0.8" height="127" fill="#9c8e62" opacity="0.30"/><rect x="65" y="5" width="1.3" height="127" fill="#a89c74" opacity="0.44"/><rect x="70" y="5" width="1" height="127" fill="#8a7c56" opacity="0.52"/><rect x="76" y="5" width="0.8" height="127" fill="#a89c74" opacity="0.34"/><rect x="80" y="5" width="1" height="127" fill="#a89c74" opacity="0.52"/><rect x="85" y="5" width="1.3" height="127" fill="#8a7c56" opacity="0.45"/><rect x="90" y="5" width="0.8" height="127" fill="#8a7c56" opacity="0.36"/><rect x="96" y="5" width="1.3" height="127" fill="#9c8e62" opacity="0.49"/><rect x="100" y="5" width="1" height="127" fill="#8a7c56" opacity="0.43"/><rect x="106" y="5" width="0.8" height="127" fill="#b8ac82" opacity="0.57"/><rect x="110" y="5" width="0.8" height="127" fill="#8a7c56" opacity="0.30"/><rect x="116" y="5" width="0.8" height="127" fill="#8a7c56" opacity="0.40"/><rect x="120" y="5" width="0.8" height="127" fill="#9c8e62" opacity="0.40"/><rect x="125" y="5" width="0.8" height="127" fill="#b8ac82" opacity="0.52"/><rect x="78" y="8" width="1.6" height="124" fill="#6e6448" opacity=".8"/><rect x="110" y="8" width="1.4" height="124" fill="#7a7050" opacity=".7"/><rect width="128" height="132" filter="url(#streak)" opacity=".18"/><rect width="128" height="132" filter="url(#grainD)" opacity="0.14"/><rect x="6" y="4" width="1.5" height="22" fill="#8a5a34" opacity="0.5"/><rect x="14" y="4" width="1" height="30" fill="#8a5a34" opacity="0.45"/><rect x="22" y="4" width="2" height="14" fill="#8a5a34" opacity="0.4"/><rect x="33" y="4" width="1.2" height="26" fill="#8a5a34" opacity="0.5"/><rect x="41" y="4" width="1" height="40" fill="#8a5a34" opacity="0.35"/><rect x="52" y="4" width="1.5" height="18" fill="#8a5a34" opacity="0.5"/><rect x="63" y="4" width="1" height="28" fill="#8a5a34" opacity="0.4"/><rect x="70" y="4" width="2" height="12" fill="#8a5a34" opacity="0.45"/><rect x="79" y="4" width="1.2" height="55" fill="#8a5a34" opacity="0.35"/><rect x="88" y="4" width="1" height="24" fill="#8a5a34" opacity="0.5"/><rect x="97" y="4" width="1.5" height="16" fill="#8a5a34" opacity="0.45"/><rect x="104" y="4" width="1" height="32" fill="#8a5a34" opacity="0.4"/><rect x="113" y="4" width="1.2" height="20" fill="#8a5a34" opacity="0.5"/><rect x="121" y="4" width="1" height="26" fill="#8a5a34" opacity="0.4"/><rect width="128" height="6" fill="#7e4e3c"/><rect width="128" height="6" filter="url(#grainD)" opacity=".3"/><rect y="1" width="128" height="1.5" fill="#5e3a30"/></svg>
<svg width="128" height="132" viewBox="0 0 128 132" style="left:1214px;top:350px;overflow:hidden"><rect width="128" height="132" fill="#3b3b3b"/><rect width="128" height="132" filter="url(#grainD)" opacity="0.28"/><rect width="128" height="132" filter="url(#grainL)" opacity="0.1"/><rect x="50" width=".6" height="132" fill="#444" opacity=".6"/><rect x="78" width=".6" height="132" fill="#464646" opacity=".6"/></svg>
<svg width="128" height="131" viewBox="0 0 128 131" style="left:290px;top:510px;overflow:hidden"><rect width="128" height="132" fill="#88735e"/><rect x="0" width="20" height="132" fill="#7a6a58" opacity=".5"/><rect x="38" width="24" height="132" fill="#766654" opacity=".45"/><rect x="84" width="18" height="132" fill="#8c7c6a" opacity=".5"/><rect width="128" height="132" filter="url(#streak)" opacity=".3"/><rect width="128" height="132" filter="url(#streakL)" opacity=".2"/><rect x="62.5" width="1.3" height="132" fill="#4e443a"/><rect x="58" width="5" height="132" fill="#5e5246" opacity=".35"/><circle cx="2.5" cy="4" r=".7" fill="#3e362e"/><circle cx="2.5" cy="13" r=".7" fill="#3e362e"/><circle cx="2.5" cy="22" r=".7" fill="#3e362e"/><circle cx="2.5" cy="31" r=".7" fill="#3e362e"/><circle cx="2.5" cy="40" r=".7" fill="#3e362e"/><circle cx="2.5" cy="49" r=".7" fill="#3e362e"/><circle cx="2.5" cy="58" r=".7" fill="#3e362e"/><circle cx="2.5" cy="67" r=".7" fill="#3e362e"/><circle cx="2.5" cy="76" r=".7" fill="#3e362e"/><circle cx="2.5" cy="85" r=".7" fill="#3e362e"/><circle cx="2.5" cy="94" r=".7" fill="#3e362e"/><circle cx="2.5" cy="103" r=".7" fill="#3e362e"/><circle cx="2.5" cy="112" r=".7" fill="#3e362e"/><circle cx="2.5" cy="121" r=".7" fill="#3e362e"/><circle cx="2.5" cy="130" r=".7" fill="#3e362e"/><circle cx="61" cy="4" r=".7" fill="#3e362e"/><circle cx="61" cy="13" r=".7" fill="#3e362e"/><circle cx="61" cy="22" r=".7" fill="#3e362e"/><circle cx="61" cy="31" r=".7" fill="#3e362e"/><circle cx="61" cy="40" r=".7" fill="#3e362e"/><circle cx="61" cy="49" r=".7" fill="#3e362e"/><circle cx="61" cy="58" r=".7" fill="#3e362e"/><circle cx="61" cy="67" r=".7" fill="#3e362e"/><circle cx="61" cy="76" r=".7" fill="#3e362e"/><circle cx="61" cy="85" r=".7" fill="#3e362e"/><circle cx="61" cy="94" r=".7" fill="#3e362e"/><circle cx="61" cy="103" r=".7" fill="#3e362e"/><circle cx="61" cy="112" r=".7" fill="#3e362e"/><circle cx="61" cy="121" r=".7" fill="#3e362e"/><circle cx="61" cy="130" r=".7" fill="#3e362e"/><circle cx="66" cy="4" r=".7" fill="#3e362e"/><circle cx="66" cy="13" r=".7" fill="#3e362e"/><circle cx="66" cy="22" r=".7" fill="#3e362e"/><circle cx="66" cy="31" r=".7" fill="#3e362e"/><circle cx="66" cy="40" r=".7" fill="#3e362e"/><circle cx="66" cy="49" r=".7" fill="#3e362e"/><circle cx="66" cy="58" r=".7" fill="#3e362e"/><circle cx="66" cy="67" r=".7" fill="#3e362e"/><circle cx="66" cy="76" r=".7" fill="#3e362e"/><circle cx="66" cy="85" r=".7" fill="#3e362e"/><circle cx="66" cy="94" r=".7" fill="#3e362e"/><circle cx="66" cy="103" r=".7" fill="#3e362e"/><circle cx="66" cy="112" r=".7" fill="#3e362e"/><circle cx="66" cy="121" r=".7" fill="#3e362e"/><circle cx="66" cy="130" r=".7" fill="#3e362e"/><circle cx="125.5" cy="4" r=".7" fill="#3e362e"/><circle cx="125.5" cy="13" r=".7" fill="#3e362e"/><circle cx="125.5" cy="22" r=".7" fill="#3e362e"/><circle cx="125.5" cy="31" r=".7" fill="#3e362e"/><circle cx="125.5" cy="40" r=".7" fill="#3e362e"/><circle cx="125.5" cy="49" r=".7" fill="#3e362e"/><circle cx="125.5" cy="58" r=".7" fill="#3e362e"/><circle cx="125.5" cy="67" r=".7" fill="#3e362e"/><circle cx="125.5" cy="76" r=".7" fill="#3e362e"/><circle cx="125.5" cy="85" r=".7" fill="#3e362e"/><circle cx="125.5" cy="94" r=".7" fill="#3e362e"/><circle cx="125.5" cy="103" r=".7" fill="#3e362e"/><circle cx="125.5" cy="112" r=".7" fill="#3e362e"/><circle cx="125.5" cy="121" r=".7" fill="#3e362e"/><circle cx="125.5" cy="130" r=".7" fill="#3e362e"/><rect width="128" height="132" filter="url(#grainD)" opacity="0.19"/></svg>
<svg width="128" height="131" viewBox="0 0 128 131" style="left:422px;top:510px;overflow:hidden"><rect width="128" height="132" fill="#8d7c68"/><rect x="14" width="22" height="132" fill="#9a8e80" opacity=".5"/><rect x="44" width="18" height="132" fill="#766a5c" opacity=".45"/><rect x="92" width="24" height="132" fill="#958878" opacity=".4"/><rect width="128" height="132" filter="url(#streak)" opacity=".28"/><rect width="128" height="132" filter="url(#streakL)" opacity=".36"/><rect x="62.5" width="1.2" height="132" fill="#5a5046"/><rect x="56" width="7" height="132" fill="#5e5448" opacity=".3"/><rect width="128" height="132" filter="url(#grainD)" opacity="0.17"/></svg>
<svg width="128" height="131" viewBox="0 0 128 131" style="left:554px;top:510px;overflow:hidden"><rect width="128" height="132" fill="#a69b7d"/></svg>
<svg width="128" height="131" viewBox="0 0 128 131" style="left:686px;top:510px;overflow:hidden"><rect width="128" height="132" fill="#38383a"/><rect width="128" height="132" filter="url(#blotch)"/><rect width="128" height="132" filter="url(#grainD)" opacity="0.25"/></svg>
<svg width="128" height="131" viewBox="0 0 128 131" style="left:818px;top:510px;overflow:hidden"><rect width="128" height="132" fill="#393939"/><rect width="128" height="132" filter="url(#cloud)" opacity=".25"/><rect width="128" height="132" filter="url(#grainD)" opacity="0.22"/><rect y="72" width="128" height="1" fill="#444" opacity=".7"/></svg>
<svg width="128" height="131" viewBox="0 0 128 131" style="left:950px;top:510px;overflow:hidden"><rect width="128" height="132" fill="#44474b"/><rect width="128" height="132" filter="url(#cloud)" opacity=".55"/><rect width="128" height="132" filter="url(#grainD)" opacity="0.28"/><rect width="128" height="132" filter="url(#grainL)" opacity="0.11"/></svg>
<svg width="128" height="131" viewBox="0 0 128 131" style="left:1082px;top:510px;overflow:hidden"><rect width="128" height="132" fill="#45484c"/><rect width="128" height="132" filter="url(#cloud)" opacity=".5" transform="scale(-1,1) translate(-128,0)"/><rect width="128" height="132" filter="url(#grainD)" opacity="0.28"/><rect width="128" height="132" filter="url(#grainL)" opacity="0.11"/></svg>
<svg width="128" height="131" viewBox="0 0 128 131" style="left:1214px;top:510px;overflow:hidden"><rect width="128" height="132" fill="#3a3a3c"/><rect width="128" height="132" filter="url(#blotch2)"/><rect width="128" height="132" filter="url(#grainD)" opacity="0.25"/></svg>
<div style="left:288px;top:346px;width:132px;height:162px;border:1px solid #fff;"></div>
<div style="left:290px;top:492px;width:128px;height:13px;background:#0000f4;"></div>
<div class="mono" style="left:290px;top:495px">ads/ad01</div>
<div style="left:291px;top:481px;width:14px;height:11px;border:1px solid #d8d2a4;border-bottom:none;border-radius:4px 4px 0 0;"></div>
<div style="left:422px;top:492px;width:128px;height:13px;background:#0000f4;"></div>
<div class="mono" style="left:422px;top:495px">ar_dizzy/dizzy_drywall_bac</div>
<div style="left:423px;top:481px;width:14px;height:11px;border:1px solid #d8d2a4;border-bottom:none;border-radius:4px 4px 0 0;"></div>
<div style="left:554px;top:492px;width:128px;height:13px;background:#0000f4;"></div>
<div class="mono" style="left:554px;top:495px">ar_dizzy/dizzy_drywall_col</div>
<div style="left:555px;top:481px;width:14px;height:11px;border:1px solid #d8d2a4;border-bottom:none;border-radius:4px 4px 0 0;"></div>
<div style="left:686px;top:492px;width:128px;height:13px;background:#0000f4;"></div>
<div class="mono" style="left:686px;top:495px">ar_dizzy/dizzy_drywall_pat</div>
<div style="left:687px;top:481px;width:14px;height:11px;border:1px solid #d8d2a4;border-bottom:none;border-radius:4px 4px 0 0;"></div>
<div style="left:818px;top:492px;width:128px;height:13px;background:#0000f4;"></div>
<div class="mono" style="left:818px;top:495px">ar_dizzy/dizzy_facade_colo</div>
<div style="left:819px;top:481px;width:14px;height:11px;border:1px solid #d8d2a4;border-bottom:none;border-radius:4px 4px 0 0;"></div>
<div style="left:950px;top:492px;width:128px;height:13px;background:#0000f4;"></div>
<div class="mono" style="left:950px;top:495px">ar_dizzy/dizzy_insulation_</div>
<div style="left:951px;top:481px;width:14px;height:11px;border:1px solid #d8d2a4;border-bottom:none;border-radius:4px 4px 0 0;"></div>
<div style="left:1082px;top:492px;width:128px;height:13px;background:#0000f4;"></div>
<div class="mono" style="left:1082px;top:495px">ar_dizzy/dizzy_shack_panel</div>
<div style="left:1083px;top:481px;width:14px;height:11px;border:1px solid #d8d2a4;border-bottom:none;border-radius:4px 4px 0 0;"></div>
<div style="left:1214px;top:492px;width:128px;height:13px;background:#0000f4;"></div>
<div class="mono" style="left:1214px;top:495px">ar_dizzy/dizzy_tar_roof_color</div>
<div style="left:1215px;top:481px;width:14px;height:11px;border:1px solid #d8d2a4;border-bottom:none;border-radius:4px 4px 0 0;"></div>
<div style="left:307px;top:481px;width:14px;height:11px;border:1px solid #f4f4f4;border-bottom:none;border-radius:4px 4px 0 0;"></div>
<div style="left:311px;top:484px;width:6px;height:6px;border-radius:50%;background:#e4e088;"></div>
<div style="left:1378px;top:345px;width:17px;height:298px;background:linear-gradient(90deg,#e6e6e6 0,#f2f2f2 4px,#f6f6f6 100%);"></div>
<svg width="7" height="4" style="left:1383px;top:352px"><path d="M0 4 L3.5 0 L7 4 Z" fill="#404040"/></svg>
<svg width="7" height="4" style="left:1383px;top:633px"><path d="M0 0 L3.5 4 L7 0 Z" fill="#606060"/></svg>
<div style="left:1379px;top:364px;width:15px;height:15px;border:1px solid #979797;border-radius:2px;background:linear-gradient(90deg,#f6f6f6 0,#e8e8e9 50%,#d6d6d8 100%);box-shadow:inset 0 0 0 1px #fff;"></div>
<div style="left:288px;top:651px;white-space:nowrap;font:normal 11px 'Liberation Sans',sans-serif;line-height:13px;letter-spacing:-0.494px;">Size:</div>
<div class="sunk" style="left:316px;top:647px;width:95px;height:20px;"></div>
<div style="left:393px;top:649px;width:16px;height:16px;background:#f0f0f0;border:1px solid;border-color:#fff #696969 #696969 #fff;box-shadow:inset -1px -1px 0 #a0a0a0;"></div>
<svg width="7" height="4" style="left:397px;top:656px"><path d="M0 0 H7 L3.5 4 Z" fill="#000"/></svg>
<div style="left:320px;top:651px;white-space:nowrap;font:normal 11px 'Liberation Sans',sans-serif;line-height:13px;letter-spacing:-0.031px;">128x128</div>
<div style="left:426px;top:651px;white-space:nowrap;font:normal 11px 'Liberation Sans',sans-serif;line-height:13px;letter-spacing:-0.357px;">Filter:</div>
<div class="sunk" style="left:457px;top:647px;width:186px;height:20px;"></div>
<div style="left:625px;top:649px;width:16px;height:16px;background:#f0f0f0;border:1px solid;border-color:#fff #696969 #696969 #fff;box-shadow:inset -1px -1px 0 #a0a0a0;"></div>
<svg width="7" height="4" style="left:629px;top:656px"><path d="M0 0 H7 L3.5 4 Z" fill="#000"/></svg>
<div style="left:460px;top:651px;width:1px;height:12px;background:#000;"></div>
<div style="left:451px;top:639px;width:198px;height:35px;border:4.5px solid #ec1c24;"></div>
<div style="left:652px;top:651px;white-space:nowrap;font:normal 11px 'Liberation Sans',sans-serif;line-height:13px;letter-spacing:-0.158px;">ads/ad01</div>
<div class="cb" style="left:288px;top:677px;width:13px;height:13px;"></div>
<div style="left:306px;top:678px;white-space:nowrap;font:normal 11px 'Liberation Sans',sans-serif;line-height:13px;letter-spacing:-0.262px;">Only used textures</div>
<div style="left:402px;top:680px;white-space:nowrap;font:normal 11px 'Liberation Sans',sans-serif;line-height:13px;letter-spacing:-0.373px;">Keywords:</div>
<div class="sunk" style="left:457px;top:677px;width:186px;height:19px;"></div>
<div style="left:625px;top:679px;width:16px;height:15px;background:#f0f0f0;border:1px solid;border-color:#fff #696969 #696969 #fff;box-shadow:inset -1px -1px 0 #a0a0a0;"></div>
<svg width="7" height="4" style="left:629px;top:685px"><path d="M0 0 H7 L3.5 4 Z" fill="#000"/></svg>
<div style="left:652px;top:676px;width:75px;height:23px;background:#f0f0f0;border:1px solid;border-color:#fff #696969 #696969 #fff;box-shadow:inset -1px -1px 0 #a0a0a0;"></div>
<div style="left:678px;top:681px;white-space:nowrap;font:normal 11px 'Liberation Sans',sans-serif;line-height:13px;letter-spacing:-0.363px;color:#000;">Mark</div>
<div style="left:735px;top:676px;width:76px;height:23px;background:#f0f0f0;border:1px solid;border-color:#fff #696969 #696969 #fff;box-shadow:inset -1px -1px 0 #a0a0a0;"></div>
<div style="left:753px;top:681px;white-space:nowrap;font:normal 11px 'Liberation Sans',sans-serif;line-height:13px;letter-spacing:-0.051px;color:#000;">Replace</div>
<div style="left:819px;top:680px;white-space:nowrap;font:normal 11px 'Liberation Sans',sans-serif;line-height:13px;letter-spacing:-0.174px;">512x512</div>
<div style="left:936px;top:647px;width:99px;height:23px;background:#f0f0f0;border:1px solid;border-color:#fff #696969 #696969 #fff;box-shadow:inset -1px -1px 0 #a0a0a0;"></div>
<div style="left:942px;top:652px;white-space:nowrap;font:normal 11px 'Liberation Sans',sans-serif;line-height:13px;letter-spacing:-0.158px;color:#000;">Explore To Source</div>
<div style="left:1039px;top:647px;width:75px;height:23px;background:#f0f0f0;border:1px solid;border-color:#fff #696969 #696969 #fff;box-shadow:inset -1px -1px 0 #a0a0a0;"></div>
<div style="left:1045px;top:652px;white-space:nowrap;font:normal 11px 'Liberation Sans',sans-serif;line-height:13px;letter-spacing:-0.166px;color:#000;">Open Source</div>
<div style="left:1040px;top:676px;width:74px;height:23px;background:#f0f0f0;border:1px solid;border-color:#fff #696969 #696969 #fff;box-shadow:inset -1px -1px 0 #a0a0a0;"></div>
<div style="left:1060px;top:681px;white-space:nowrap;font:normal 11px 'Liberation Sans',sans-serif;line-height:13px;letter-spacing:-0.143px;color:#000;">Reload</div>
<div class="cb" style="left:1129px;top:649px;width:13px;height:13px;"></div>
<svg width="9" height="9" style="left:1131px;top:651px"><path d="M1 3.5 L3.5 6 L8 1.5 V4 L3.5 8.5 L1 6 Z" fill="#000"/></svg>
<div style="left:1148px;top:650px;white-space:nowrap;font:normal 11px 'Liberation Sans',sans-serif;line-height:13px;letter-spacing:-0.359px;">Opaque</div>
<div class="cb" style="left:1129px;top:678px;width:13px;height:13px;"></div>
<svg width="9" height="9" style="left:1131px;top:680px"><path d="M1 3.5 L3.5 6 L8 1.5 V4 L3.5 8.5 L1 6 Z" fill="#000"/></svg>
<div style="left:1148px;top:679px;white-space:nowrap;font:normal 11px 'Liberation Sans',sans-serif;line-height:13px;letter-spacing:-0.188px;">Translucent</div>
<div class="cb" style="left:1216px;top:649px;width:13px;height:13px;"></div>
<svg width="9" height="9" style="left:1218px;top:651px"><path d="M1 3.5 L3.5 6 L8 1.5 V4 L3.5 8.5 L1 6 Z" fill="#000"/></svg>
<div style="left:1234px;top:650px;white-space:nowrap;font:normal 11px 'Liberation Sans',sans-serif;line-height:13px;letter-spacing:-0.354px;">SelfIllum</div>
<div class="cb" style="left:1216px;top:678px;width:13px;height:13px;"></div>
<svg width="9" height="9" style="left:1218px;top:680px"><path d="M1 3.5 L3.5 6 L8 1.5 V4 L3.5 8.5 L1 6 Z" fill="#000"/></svg>
<div style="left:1234px;top:679px;white-space:nowrap;font:normal 11px 'Liberation Sans',sans-serif;line-height:13px;letter-spacing:-0.179px;">EnvMask</div>
<div class="cb" style="left:1300px;top:649px;width:13px;height:13px;"></div>
<svg width="9" height="9" style="left:1302px;top:651px"><path d="M1 3.5 L3.5 6 L8 1.5 V4 L3.5 8.5 L1 6 Z" fill="#000"/></svg>
<div style="left:1318px;top:650px;white-space:nowrap;font:normal 11px 'Liberation Sans',sans-serif;line-height:13px;letter-spacing:-0.321px;">Show Errors</div>
<div style="left:286px;top:698px;width:1109px;height:1px;background:#e6ebf1;"></div>
</body></html>
